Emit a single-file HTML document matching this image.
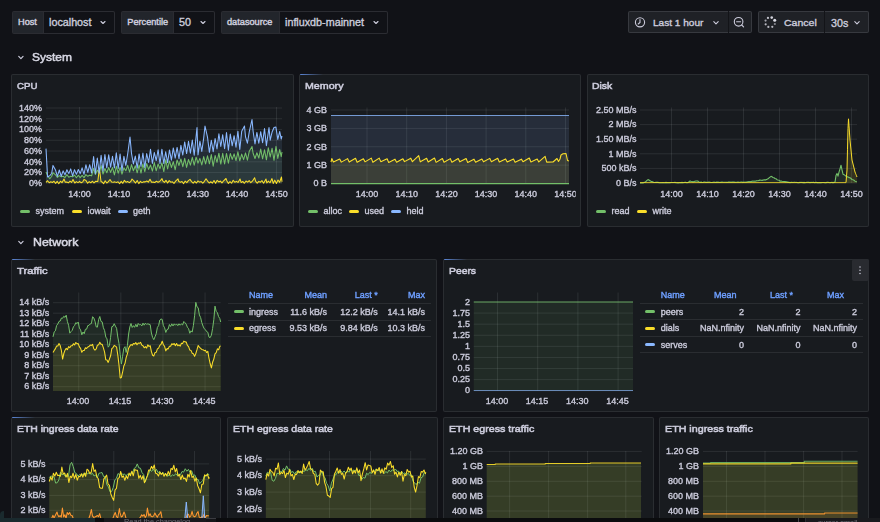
<!DOCTYPE html>
<html><head><meta charset="utf-8"><style>
html,body{margin:0;padding:0;width:880px;height:522px;overflow:hidden;background:#111217;font-family:"Liberation Sans", sans-serif;}
.t{position:absolute;white-space:nowrap;-webkit-text-stroke-width:0.35px;}
.b{position:absolute;}
svg{position:absolute;left:0;top:0;}
</style></head><body>
<div class="b" style="left:12px;top:11px;width:102.5px;height:22.5px;background:#111217;box-sizing:border-box;border:1px solid rgba(204,204,220,0.14);border-radius:2px;"></div><div class="b" style="left:13px;top:12px;width:29.5px;height:20.5px;background:#22252b;"></div><div class="b" style="left:42.5px;top:12px;width:1.0px;height:20.5px;background:rgba(204,204,220,0.14);"></div><div class="b" style="left:121.25px;top:11px;width:93.25px;height:22.5px;background:#111217;box-sizing:border-box;border:1px solid rgba(204,204,220,0.14);border-radius:2px;"></div><div class="b" style="left:122.25px;top:12px;width:51.0px;height:20.5px;background:#22252b;"></div><div class="b" style="left:173.25px;top:12px;width:1.0px;height:20.5px;background:rgba(204,204,220,0.14);"></div><div class="b" style="left:221px;top:11px;width:166.5px;height:22.5px;background:#111217;box-sizing:border-box;border:1px solid rgba(204,204,220,0.14);border-radius:2px;"></div><div class="b" style="left:222px;top:12px;width:57px;height:20.5px;background:#22252b;"></div><div class="b" style="left:279px;top:12px;width:1px;height:20.5px;background:rgba(204,204,220,0.14);"></div><div class="b" style="left:627.6px;top:11px;width:124.39999999999998px;height:22.4px;background:#1f2126;box-sizing:border-box;border:1px solid rgba(204,204,220,0.14);border-radius:2px;"></div><div class="b" style="left:727.5px;top:11px;width:1.0px;height:22.4px;background:#131418;"></div><div class="b" style="left:758px;top:11px;width:111px;height:22.200000000000003px;background:#1f2126;box-sizing:border-box;border:1px solid rgba(204,204,220,0.14);border-radius:2px;"></div><div class="b" style="left:824.2px;top:11px;width:1.0px;height:22.200000000000003px;background:#131418;"></div><div class="b" style="left:11px;top:74px;width:282.5px;height:153px;background:#181b1f;box-sizing:border-box;border:1px solid rgba(204,204,220,0.10);border-radius:2px;"></div><div class="b" style="left:299px;top:74px;width:282px;height:153px;background:#181b1f;box-sizing:border-box;border:1px solid rgba(204,204,220,0.10);border-radius:2px;"></div><div class="b" style="left:300px;top:74.2px;width:23px;height:1.2000000000000028px;background:linear-gradient(90deg,#5b86d8,rgba(91,134,216,0));border-top-left-radius:2px;"></div><div class="b" style="left:586.5px;top:74px;width:282.5px;height:153px;background:#181b1f;box-sizing:border-box;border:1px solid rgba(204,204,220,0.10);border-radius:2px;"></div><div class="b" style="left:20px;top:209.9px;width:10px;height:3.0px;background:#73bf69;border-radius:1.5px;"></div><div class="b" style="left:72px;top:209.9px;width:10px;height:3.0px;background:#fade2a;border-radius:1.5px;"></div><div class="b" style="left:117.5px;top:209.9px;width:10.0px;height:3.0px;background:#8ab8ff;border-radius:1.5px;"></div><div class="b" style="left:308px;top:209.9px;width:10px;height:3.0px;background:#73bf69;border-radius:1.5px;"></div><div class="b" style="left:349px;top:209.9px;width:10px;height:3.0px;background:#fade2a;border-radius:1.5px;"></div><div class="b" style="left:391px;top:209.9px;width:10px;height:3.0px;background:#8ab8ff;border-radius:1.5px;"></div><div class="b" style="left:596px;top:209.9px;width:10px;height:3.0px;background:#73bf69;border-radius:1.5px;"></div><div class="b" style="left:637px;top:209.9px;width:10px;height:3.0px;background:#fade2a;border-radius:1.5px;"></div><div class="b" style="left:11px;top:259px;width:426px;height:153px;background:#181b1f;box-sizing:border-box;border:1px solid rgba(204,204,220,0.10);border-radius:2px;"></div><div class="b" style="left:12px;top:259.2px;width:23px;height:1.1999999999999886px;background:linear-gradient(90deg,#5b86d8,rgba(91,134,216,0));border-top-left-radius:2px;"></div><div class="b" style="left:443px;top:259px;width:426px;height:153px;background:#181b1f;box-sizing:border-box;border:1px solid rgba(204,204,220,0.10);border-radius:2px;"></div><div class="b" style="left:444px;top:259.2px;width:23px;height:1.1999999999999886px;background:linear-gradient(90deg,#5b86d8,rgba(91,134,216,0));border-top-left-radius:2px;"></div><div class="b" style="left:228px;top:303.0px;width:202.7px;height:1.0px;background:rgba(204,204,220,0.10);"></div><div class="b" style="left:228px;top:319.5px;width:202.7px;height:1.0px;background:rgba(204,204,220,0.10);"></div><div class="b" style="left:228px;top:336.0px;width:202.7px;height:1.0px;background:rgba(204,204,220,0.10);"></div><div class="b" style="left:233.5px;top:310.0px;width:10.0px;height:3.0px;background:#73bf69;border-radius:1.5px;"></div><div class="b" style="left:233.5px;top:326.5px;width:10.0px;height:3.0px;background:#fade2a;border-radius:1.5px;"></div><div class="b" style="left:640px;top:302.5px;width:222.5px;height:1.0px;background:rgba(204,204,220,0.10);"></div><div class="b" style="left:640px;top:319.0px;width:222.5px;height:1.0px;background:rgba(204,204,220,0.10);"></div><div class="b" style="left:640px;top:335.5px;width:222.5px;height:1.0px;background:rgba(204,204,220,0.10);"></div><div class="b" style="left:640px;top:352.0px;width:222.5px;height:1.0px;background:rgba(204,204,220,0.10);"></div><div class="b" style="left:645.2px;top:310.0px;width:10.0px;height:3.0px;background:#73bf69;border-radius:1.5px;"></div><div class="b" style="left:645.2px;top:326.5px;width:10.0px;height:3.0px;background:#fade2a;border-radius:1.5px;"></div><div class="b" style="left:645.2px;top:343.0px;width:10.0px;height:3.0px;background:#8ab8ff;border-radius:1.5px;"></div><div class="b" style="left:11px;top:417px;width:210.3px;height:123px;background:#181b1f;box-sizing:border-box;border:1px solid rgba(204,204,220,0.10);border-radius:2px;"></div><div class="b" style="left:12px;top:417.2px;width:23px;height:1.1999999999999886px;background:linear-gradient(90deg,#5b86d8,rgba(91,134,216,0));border-top-left-radius:2px;"></div><div class="b" style="left:227.3px;top:417px;width:210.7px;height:123px;background:#181b1f;box-sizing:border-box;border:1px solid rgba(204,204,220,0.10);border-radius:2px;"></div><div class="b" style="left:443px;top:417px;width:211px;height:123px;background:#181b1f;box-sizing:border-box;border:1px solid rgba(204,204,220,0.10);border-radius:2px;"></div><div class="b" style="left:659px;top:417px;width:210px;height:123px;background:#181b1f;box-sizing:border-box;border:1px solid rgba(204,204,220,0.10);border-radius:2px;"></div>
<svg width="880" height="522" viewBox="0 0 880 522">
<path d="M101.0,21.5 L103.0,23.5 L105.0,21.5" fill="none" stroke="#ccccdc" stroke-width="1.1" stroke-linecap="round" stroke-linejoin="round"/><path d="M201.0,21.5 L203.0,23.5 L205.0,21.5" fill="none" stroke="#ccccdc" stroke-width="1.1" stroke-linecap="round" stroke-linejoin="round"/><path d="M374.0,21.5 L376.0,23.5 L378.0,21.5" fill="none" stroke="#ccccdc" stroke-width="1.1" stroke-linecap="round" stroke-linejoin="round"/><circle cx="640" cy="22.3" r="4.6" fill="none" stroke="#ccccdc" stroke-width="1.1"/><path d="M640,19.6 L640,22.5 L638.2,24" fill="none" stroke="#ccccdc" stroke-width="1.1" stroke-linecap="round"/><path d="M713.8,21.7 L716,23.900000000000002 L718.2,21.7" fill="none" stroke="#ccccdc" stroke-width="1.1" stroke-linecap="round" stroke-linejoin="round"/><circle cx="738.6" cy="21.8" r="4.3" fill="none" stroke="#ccccdc" stroke-width="1.1"/><path d="M736.6,21.8 L740.6,21.8 M741.7,25 L743.6,26.9" fill="none" stroke="#ccccdc" stroke-width="1.1" stroke-linecap="round"/><circle cx="767.95" cy="17.89" r="1.15" fill="#dcdce6" fill-opacity="0.85"/><circle cx="771.73" cy="17.59" r="1.3" fill="#dcdce6" fill-opacity="0.95"/><circle cx="774.69" cy="20.21" r="1.5" fill="#dcdce6" fill-opacity="1"/><circle cx="774.85" cy="23.99" r="1.1" fill="#dcdce6" fill-opacity="0.55"/><circle cx="772.29" cy="26.79" r="1.1" fill="#dcdce6" fill-opacity="0.8"/><circle cx="768.35" cy="26.89" r="1.1" fill="#dcdce6" fill-opacity="0.8"/><circle cx="765.68" cy="24.31" r="1.1" fill="#dcdce6" fill-opacity="0.8"/><circle cx="765.55" cy="20.61" r="1.1" fill="#dcdce6" fill-opacity="0.7"/><path d="M854.8,21.7 L857,23.900000000000002 L859.2,21.7" fill="none" stroke="#ccccdc" stroke-width="1.1" stroke-linecap="round" stroke-linejoin="round"/><path d="M18.75,56.425 L20.9,58.575 L23.049999999999997,56.425" fill="none" stroke="#ccccdc" stroke-width="1.2" stroke-linecap="round" stroke-linejoin="round"/><path d="M18.75,241.425 L20.9,243.575 L23.049999999999997,241.425" fill="none" stroke="#ccccdc" stroke-width="1.2" stroke-linecap="round" stroke-linejoin="round"/><line x1="46" y1="108.0" x2="282" y2="108.0" stroke="rgba(240,250,255,0.09)" stroke-width="1"/><line x1="46" y1="118.76" x2="282" y2="118.76" stroke="rgba(240,250,255,0.09)" stroke-width="1"/><line x1="46" y1="129.52" x2="282" y2="129.52" stroke="rgba(240,250,255,0.09)" stroke-width="1"/><line x1="46" y1="140.28" x2="282" y2="140.28" stroke="rgba(240,250,255,0.09)" stroke-width="1"/><line x1="46" y1="151.04" x2="282" y2="151.04" stroke="rgba(240,250,255,0.09)" stroke-width="1"/><line x1="46" y1="161.8" x2="282" y2="161.8" stroke="rgba(240,250,255,0.09)" stroke-width="1"/><line x1="46" y1="172.56" x2="282" y2="172.56" stroke="rgba(240,250,255,0.09)" stroke-width="1"/><line x1="46" y1="183.32" x2="282" y2="183.32" stroke="rgba(240,250,255,0.09)" stroke-width="1"/><line x1="79.5" y1="107" x2="79.5" y2="183" stroke="rgba(240,250,255,0.09)" stroke-width="1"/><line x1="118.9" y1="107" x2="118.9" y2="183" stroke="rgba(240,250,255,0.09)" stroke-width="1"/><line x1="158.3" y1="107" x2="158.3" y2="183" stroke="rgba(240,250,255,0.09)" stroke-width="1"/><line x1="197.7" y1="107" x2="197.7" y2="183" stroke="rgba(240,250,255,0.09)" stroke-width="1"/><line x1="237.1" y1="107" x2="237.1" y2="183" stroke="rgba(240,250,255,0.09)" stroke-width="1"/><line x1="276.5" y1="107" x2="276.5" y2="183" stroke="rgba(240,250,255,0.09)" stroke-width="1"/><path d="M46,183 L46,172 L47.9,176.14 L49.8,178.72 L51.7,176.3 L53,172.7 L55.5,174.8 L57.4,177.48 L59.3,175.65 L61.2,176.85 L63.1,176.26 L65.0,177.59 L66.9,174.61 L68.8,177.31 L70.7,176.34 L72.6,176.86 L74.5,175.03 L76.4,177.78 L78.3,175.24 L80.2,177.58 L82.1,175.29 L84.0,177.62 L85.9,174.65 L87.8,176.3 L89.7,175.15 L91.6,175.85 L93.6,168.3 L95.4,174.56 L97.3,170.18 L99.2,172.59 L101.1,165.52 L103.0,174.06 L104.9,168.49 L106.8,172.75 L108.7,167.47 L110.6,172.39 L112.5,167.48 L114.4,174.96 L116.3,166.29 L118.2,173.15 L120.1,167.47 L122.0,174.12 L123.9,167.8 L125.8,170.72 L127.7,165.36 L129.6,172.03 L131.5,164.53 L133.4,170.74 L135.3,165.74 L137.2,172.8 L139.1,164.97 L141.0,173.06 L142.9,163.94 L144.8,171.63 L146.7,163.63 L148.6,169.38 L150.5,164.99 L152.4,171.11 L154.3,162.52 L156.2,170.8 L158.1,163.96 L160.0,168.71 L161.9,162.85 L163.8,171.55 L165.7,159.71 L167.6,168.96 L169.5,160.96 L171.4,167.47 L173.3,161.7 L175.2,169.77 L177.1,159.95 L179.0,165.46 L180.9,158.97 L182.8,166.69 L184.7,158.3 L186.6,167.41 L188.5,159.45 L190.4,165.09 L192.3,157.32 L194.2,165.23 L196.1,157.17 L198.0,163.15 L199.9,158.4 L201.8,164.89 L203.7,156.52 L205.6,163.87 L207.5,155.76 L209.4,163.77 L211.3,154.61 L213.2,166.19 L215.1,155.47 L217.0,162.29 L218.9,153.2 L220.8,164.04 L222.7,153.29 L224.6,163.93 L226.5,153.44 L228.4,163.15 L230.3,153.5 L232.2,159.45 L234.1,153.85 L236.0,160.57 L237.9,151.86 L239.8,160.8 L241.7,154.11 L243.6,159.64 L245.5,152.89 L247.4,160.13 L249.3,151.15 L252,146.4 L253.1,153.26 L255.0,158.47 L256.9,152.77 L258.8,158.05 L260.7,149.06 L262.6,158.8 L264.5,149.75 L266.4,159.8 L268.3,147.77 L270.2,156.9 L272.1,148.22 L274.0,160.33 L276,146.4 L277.8,158.46 L279.7,149.63 L281.2,156.6 L282,152.0 L282,183 Z" fill="#73bf69" fill-opacity="0.1" stroke="none"/><path d="M46,183 L46,182.33 L47.6,180.71 L49.2,182.8 L50.8,181.79 L52.4,182.49 L54.0,181.19 L55.6,183.35 L57.2,181.33 L58.8,183.68 L60.4,181.19 L62.0,182.71 L64,179 L65.2,182.12 L66.8,181.99 L68.4,182.79 L70.0,181.08 L71.6,182.37 L73,179.5 L74.8,182.99 L76.4,181.64 L78.0,182.61 L79.6,181.39 L81.2,182.82 L82.8,181.85 L84,179.6 L86.0,180.4 L87.6,183.22 L89.2,181.61 L90.8,182.77 L92.4,181.2 L94.0,182.98 L95.6,181.28 L97.8,181.5 L99.4,168.3 L101,181.5 L102.0,181.96 L103.6,183.72 L105.2,180.72 L106.8,183.04 L108.4,181.64 L110,179.5 L111.6,182.03 L113.2,182.23 L114.8,181.88 L116.4,182.46 L118.0,181.76 L119.6,183.68 L121.2,181.33 L122.8,183.31 L124.4,180.36 L126.0,182.23 L127.6,181.45 L129.2,182.63 L130.8,181.55 L132,179 L134.0,181.09 L135.6,183.06 L137.2,180.44 L138.8,183.62 L140.4,181.29 L142.0,182.63 L143.6,181.74 L145.2,181.87 L146.8,180.98 L148.4,182.1 L150,179.2 L151.6,182.32 L153.2,182.12 L154.8,182.47 L156.4,181.18 L158.0,182.21 L159.6,181.54 L162,178.6 L162.8,180.97 L164.4,182.38 L166.0,180.37 L167.6,183.05 L169.2,180.62 L170.8,182.22 L172.4,181.77 L174.0,183.44 L175.6,181.15 L178,178.8 L178.8,181.48 L180.4,182.29 L182.0,181.5 L183.6,183.58 L185.2,181.14 L186.8,182.6 L188.4,180.56 L190,179.4 L191.6,181.57 L193.2,183.17 L194.8,181.36 L196.4,183.05 L198.0,180.94 L199.6,182.12 L201.2,181.51 L202.8,183.1 L204.4,181.33 L206,178.8 L207.6,181.06 L209.2,183.01 L210.8,181.74 L212.4,183.07 L214.0,180.44 L215.6,183.33 L217.2,180.35 L218.8,181.96 L220.4,181.06 L222.0,182.92 L223.6,180.77 L226,178.5 L226.8,180.67 L228.4,183.44 L230.0,181.57 L231.6,183.24 L233.2,180.27 L234.8,182.25 L236.4,181.34 L238.0,182.43 L240,179 L241.2,182.58 L242.8,181.45 L244.4,183.28 L246.0,180.99 L247.6,182.12 L249.2,180.56 L250.8,182.7 L252.4,181.22 L254.6,177.7 L255.6,181.12 L257.2,183.21 L258.8,181.39 L260.4,182.2 L262.0,180.66 L263.6,183.18 L266,179 L266.8,182.87 L268.4,181.16 L270.0,182.75 L272,178.6 L273.2,183.47 L274.8,180.11 L276.4,183.42 L278.0,180.03 L279.6,182.28 L281.5,177 L282,181.8 L282,183 Z" fill="#fade2a" fill-opacity="0.1" stroke="none"/><path d="M46,183 L46,148.6 L47.6,177 L49.8,175.63 L51.7,173.2 L53,165.4 L55.5,169.98 L57.4,176.34 L59.3,169.98 L61.2,176.26 L63.1,170.87 L65.0,174.83 L66.9,169.71 L68.8,173.61 L70.7,168.9 L72.6,175.81 L74.5,169.67 L76.4,174.33 L78.3,169.44 L80.2,173.59 L82.1,167.87 L84.0,174.32 L85.9,164.75 L87.8,172.31 L89.7,164.68 L91.6,172.93 L93.6,156.6 L95.4,173.74 L97.3,158.05 L99.2,173.1 L101.1,155.23 L103.0,171.16 L104.9,154.46 L106.8,167.81 L108.7,154.78 L110.6,167.12 L112.5,156.32 L114.4,167.99 L116.3,152.83 L118.2,168.45 L120.1,154.13 L122.0,171.05 L123.9,156.28 L125.8,165.35 L127.7,153.71 L130,137 L131.5,153.37 L133.4,163.98 L135.3,156.04 L137.2,168.1 L139.1,153.94 L141.0,166.38 L142.9,153.01 L144.8,167.64 L146.7,153.5 L148.6,162.4 L150.5,149.26 L152.4,163.42 L154.3,152.42 L156.2,160.59 L158.1,149.75 L160.0,163.7 L161.9,149.16 L163.8,163.59 L165.7,151.79 L167.6,162.71 L169.5,149.94 L171.4,160.11 L173.3,147.95 L175.2,158.1 L177.1,147.41 L179.0,158.68 L180.9,145.24 L182.8,155.04 L184.7,141.93 L186.6,153.56 L188.5,141.33 L190.4,153.2 L192.3,139.97 L194.2,155.26 L197,127.5 L198.0,154.85 L199.9,141.2 L201.8,151.39 L203.7,138.05 L205,126 L207.5,137.11 L209.4,152.35 L211.3,140.28 L213.2,151.63 L215.1,138.49 L217.0,148.91 L218.9,133.73 L220.8,146.52 L222.7,134.7 L224.6,148.8 L226.5,132.54 L228.4,150.15 L230.3,134.14 L232.2,145.8 L234.1,135.71 L236.0,147.18 L237.9,131.16 L239.8,149.42 L241.7,131.23 L244.5,126 L245.5,136.76 L247.4,143.18 L249.3,131.58 L252,119.5 L253.1,131.23 L255.0,143.96 L256.9,132.46 L258.8,143.26 L260.7,131.71 L262.6,142.62 L264.5,128.58 L266.4,145.61 L269,127.5 L270.2,140.25 L272.1,131.93 L274,127.5 L275.9,127.07 L277.8,139.37 L279.7,131.45 L281.2,139 L282,136.0 L282,183 Z" fill="#8ab8ff" fill-opacity="0.1" stroke="none"/><path d="M46,172 L47.9,176.14 L49.8,178.72 L51.7,176.3 L53,172.7 L55.5,174.8 L57.4,177.48 L59.3,175.65 L61.2,176.85 L63.1,176.26 L65.0,177.59 L66.9,174.61 L68.8,177.31 L70.7,176.34 L72.6,176.86 L74.5,175.03 L76.4,177.78 L78.3,175.24 L80.2,177.58 L82.1,175.29 L84.0,177.62 L85.9,174.65 L87.8,176.3 L89.7,175.15 L91.6,175.85 L93.6,168.3 L95.4,174.56 L97.3,170.18 L99.2,172.59 L101.1,165.52 L103.0,174.06 L104.9,168.49 L106.8,172.75 L108.7,167.47 L110.6,172.39 L112.5,167.48 L114.4,174.96 L116.3,166.29 L118.2,173.15 L120.1,167.47 L122.0,174.12 L123.9,167.8 L125.8,170.72 L127.7,165.36 L129.6,172.03 L131.5,164.53 L133.4,170.74 L135.3,165.74 L137.2,172.8 L139.1,164.97 L141.0,173.06 L142.9,163.94 L144.8,171.63 L146.7,163.63 L148.6,169.38 L150.5,164.99 L152.4,171.11 L154.3,162.52 L156.2,170.8 L158.1,163.96 L160.0,168.71 L161.9,162.85 L163.8,171.55 L165.7,159.71 L167.6,168.96 L169.5,160.96 L171.4,167.47 L173.3,161.7 L175.2,169.77 L177.1,159.95 L179.0,165.46 L180.9,158.97 L182.8,166.69 L184.7,158.3 L186.6,167.41 L188.5,159.45 L190.4,165.09 L192.3,157.32 L194.2,165.23 L196.1,157.17 L198.0,163.15 L199.9,158.4 L201.8,164.89 L203.7,156.52 L205.6,163.87 L207.5,155.76 L209.4,163.77 L211.3,154.61 L213.2,166.19 L215.1,155.47 L217.0,162.29 L218.9,153.2 L220.8,164.04 L222.7,153.29 L224.6,163.93 L226.5,153.44 L228.4,163.15 L230.3,153.5 L232.2,159.45 L234.1,153.85 L236.0,160.57 L237.9,151.86 L239.8,160.8 L241.7,154.11 L243.6,159.64 L245.5,152.89 L247.4,160.13 L249.3,151.15 L252,146.4 L253.1,153.26 L255.0,158.47 L256.9,152.77 L258.8,158.05 L260.7,149.06 L262.6,158.8 L264.5,149.75 L266.4,159.8 L268.3,147.77 L270.2,156.9 L272.1,148.22 L274.0,160.33 L276,146.4 L277.8,158.46 L279.7,149.63 L281.2,156.6 L282,152.0" fill="none" stroke="#73bf69" stroke-width="1.05" stroke-linejoin="round" stroke-opacity="1"/><path d="M46,182.33 L47.6,180.71 L49.2,182.8 L50.8,181.79 L52.4,182.49 L54.0,181.19 L55.6,183.35 L57.2,181.33 L58.8,183.68 L60.4,181.19 L62.0,182.71 L64,179 L65.2,182.12 L66.8,181.99 L68.4,182.79 L70.0,181.08 L71.6,182.37 L73,179.5 L74.8,182.99 L76.4,181.64 L78.0,182.61 L79.6,181.39 L81.2,182.82 L82.8,181.85 L84,179.6 L86.0,180.4 L87.6,183.22 L89.2,181.61 L90.8,182.77 L92.4,181.2 L94.0,182.98 L95.6,181.28 L97.8,181.5 L99.4,168.3 L101,181.5 L102.0,181.96 L103.6,183.72 L105.2,180.72 L106.8,183.04 L108.4,181.64 L110,179.5 L111.6,182.03 L113.2,182.23 L114.8,181.88 L116.4,182.46 L118.0,181.76 L119.6,183.68 L121.2,181.33 L122.8,183.31 L124.4,180.36 L126.0,182.23 L127.6,181.45 L129.2,182.63 L130.8,181.55 L132,179 L134.0,181.09 L135.6,183.06 L137.2,180.44 L138.8,183.62 L140.4,181.29 L142.0,182.63 L143.6,181.74 L145.2,181.87 L146.8,180.98 L148.4,182.1 L150,179.2 L151.6,182.32 L153.2,182.12 L154.8,182.47 L156.4,181.18 L158.0,182.21 L159.6,181.54 L162,178.6 L162.8,180.97 L164.4,182.38 L166.0,180.37 L167.6,183.05 L169.2,180.62 L170.8,182.22 L172.4,181.77 L174.0,183.44 L175.6,181.15 L178,178.8 L178.8,181.48 L180.4,182.29 L182.0,181.5 L183.6,183.58 L185.2,181.14 L186.8,182.6 L188.4,180.56 L190,179.4 L191.6,181.57 L193.2,183.17 L194.8,181.36 L196.4,183.05 L198.0,180.94 L199.6,182.12 L201.2,181.51 L202.8,183.1 L204.4,181.33 L206,178.8 L207.6,181.06 L209.2,183.01 L210.8,181.74 L212.4,183.07 L214.0,180.44 L215.6,183.33 L217.2,180.35 L218.8,181.96 L220.4,181.06 L222.0,182.92 L223.6,180.77 L226,178.5 L226.8,180.67 L228.4,183.44 L230.0,181.57 L231.6,183.24 L233.2,180.27 L234.8,182.25 L236.4,181.34 L238.0,182.43 L240,179 L241.2,182.58 L242.8,181.45 L244.4,183.28 L246.0,180.99 L247.6,182.12 L249.2,180.56 L250.8,182.7 L252.4,181.22 L254.6,177.7 L255.6,181.12 L257.2,183.21 L258.8,181.39 L260.4,182.2 L262.0,180.66 L263.6,183.18 L266,179 L266.8,182.87 L268.4,181.16 L270.0,182.75 L272,178.6 L273.2,183.47 L274.8,180.11 L276.4,183.42 L278.0,180.03 L279.6,182.28 L281.5,177 L282,181.8" fill="none" stroke="#fade2a" stroke-width="1.05" stroke-linejoin="round" stroke-opacity="1"/><path d="M46,148.6 L47.6,177 L49.8,175.63 L51.7,173.2 L53,165.4 L55.5,169.98 L57.4,176.34 L59.3,169.98 L61.2,176.26 L63.1,170.87 L65.0,174.83 L66.9,169.71 L68.8,173.61 L70.7,168.9 L72.6,175.81 L74.5,169.67 L76.4,174.33 L78.3,169.44 L80.2,173.59 L82.1,167.87 L84.0,174.32 L85.9,164.75 L87.8,172.31 L89.7,164.68 L91.6,172.93 L93.6,156.6 L95.4,173.74 L97.3,158.05 L99.2,173.1 L101.1,155.23 L103.0,171.16 L104.9,154.46 L106.8,167.81 L108.7,154.78 L110.6,167.12 L112.5,156.32 L114.4,167.99 L116.3,152.83 L118.2,168.45 L120.1,154.13 L122.0,171.05 L123.9,156.28 L125.8,165.35 L127.7,153.71 L130,137 L131.5,153.37 L133.4,163.98 L135.3,156.04 L137.2,168.1 L139.1,153.94 L141.0,166.38 L142.9,153.01 L144.8,167.64 L146.7,153.5 L148.6,162.4 L150.5,149.26 L152.4,163.42 L154.3,152.42 L156.2,160.59 L158.1,149.75 L160.0,163.7 L161.9,149.16 L163.8,163.59 L165.7,151.79 L167.6,162.71 L169.5,149.94 L171.4,160.11 L173.3,147.95 L175.2,158.1 L177.1,147.41 L179.0,158.68 L180.9,145.24 L182.8,155.04 L184.7,141.93 L186.6,153.56 L188.5,141.33 L190.4,153.2 L192.3,139.97 L194.2,155.26 L197,127.5 L198.0,154.85 L199.9,141.2 L201.8,151.39 L203.7,138.05 L205,126 L207.5,137.11 L209.4,152.35 L211.3,140.28 L213.2,151.63 L215.1,138.49 L217.0,148.91 L218.9,133.73 L220.8,146.52 L222.7,134.7 L224.6,148.8 L226.5,132.54 L228.4,150.15 L230.3,134.14 L232.2,145.8 L234.1,135.71 L236.0,147.18 L237.9,131.16 L239.8,149.42 L241.7,131.23 L244.5,126 L245.5,136.76 L247.4,143.18 L249.3,131.58 L252,119.5 L253.1,131.23 L255.0,143.96 L256.9,132.46 L258.8,143.26 L260.7,131.71 L262.6,142.62 L264.5,128.58 L266.4,145.61 L269,127.5 L270.2,140.25 L272.1,131.93 L274,127.5 L275.9,127.07 L277.8,139.37 L279.7,131.45 L281.2,139 L282,136.0" fill="none" stroke="#8ab8ff" stroke-width="1.05" stroke-linejoin="round" stroke-opacity="1"/><line x1="331" y1="110.0" x2="569" y2="110.0" stroke="rgba(240,250,255,0.09)" stroke-width="1"/><line x1="331" y1="128.375" x2="569" y2="128.375" stroke="rgba(240,250,255,0.09)" stroke-width="1"/><line x1="331" y1="146.75" x2="569" y2="146.75" stroke="rgba(240,250,255,0.09)" stroke-width="1"/><line x1="331" y1="165.125" x2="569" y2="165.125" stroke="rgba(240,250,255,0.09)" stroke-width="1"/><line x1="331" y1="183.5" x2="569" y2="183.5" stroke="rgba(240,250,255,0.09)" stroke-width="1"/><line x1="367.0" y1="107.5" x2="367.0" y2="183.5" stroke="rgba(240,250,255,0.09)" stroke-width="1"/><line x1="406.7" y1="107.5" x2="406.7" y2="183.5" stroke="rgba(240,250,255,0.09)" stroke-width="1"/><line x1="446.4" y1="107.5" x2="446.4" y2="183.5" stroke="rgba(240,250,255,0.09)" stroke-width="1"/><line x1="486.1" y1="107.5" x2="486.1" y2="183.5" stroke="rgba(240,250,255,0.09)" stroke-width="1"/><line x1="525.8" y1="107.5" x2="525.8" y2="183.5" stroke="rgba(240,250,255,0.09)" stroke-width="1"/><line x1="565.5" y1="107.5" x2="565.5" y2="183.5" stroke="rgba(240,250,255,0.09)" stroke-width="1"/><path d="M331,183.5 L331,115.5 L341,115.5 L351,115.5 L361,115.5 L371,115.5 L381,115.5 L391,115.5 L401,115.5 L411,115.5 L421,115.5 L431,115.5 L441,115.5 L451,115.5 L461,115.5 L471,115.5 L481,115.5 L491,115.5 L501,115.5 L511,115.5 L521,115.5 L531,115.5 L541,115.5 L551,115.5 L561,115.5 L569,115.5 L569,183.5 Z" fill="#8ab8ff" fill-opacity="0.12" stroke="none"/><path d="M331,183.5 L331,162.10379514747245 L331.8,158.54285546421178 L333.4,162.0190850630898 L339.7,159.10905270082847 L341.29999999999995,162.1286463459649 L347.59999999999997,158.60940952767473 L349.19999999999993,162.06071777513762 L355.49999999999994,158.22159241262585 L357.0999999999999,162.31367918526794 L363.3999999999999,158.75585926426015 L364.9999999999999,161.87306113636208 L371.2999999999999,158.11294814747507 L372.89999999999986,162.32868008093047 L379.1999999999999,158.10880464499022 L380.79999999999984,161.63769230273286 L387.09999999999985,158.83212617904948 L388.6999999999998,162.468282003013 L394.99999999999983,159.17863210495852 L396.5999999999998,162.1540064341207 L402.8999999999998,158.7847070402406 L404.4999999999998,161.61350066325465 L410.7999999999998,158.18899291416818 L412.39999999999975,161.65359599465197 L418.69999999999976,155.7 L420.2999999999997,161.81774871229868 L426.59999999999974,158.2282499153575 L428.1999999999997,162.01754101510096 L434.4999999999997,158.03609910706973 L436.0999999999997,162.35818441566667 L442.3999999999997,158.528637339988 L443.99999999999966,162.17626253712726 L450.29999999999967,158.6229489377169 L451.89999999999964,162.19620457870133 L458.19999999999965,158.59972778264813 L459.7999999999996,161.8503466096975 L466.0999999999996,158.54879585791946 L467.6999999999996,162.4961224774906 L473.9999999999996,159.1971874405557 L475.59999999999957,162.23702865934814 L481.8999999999996,159.00825865939143 L483.49999999999955,161.80669931144712 L489.79999999999956,158.37833266041866 L491.3999999999995,161.66320114960394 L497.69999999999953,158.34684793677704 L499.2999999999995,161.96035982442663 L505.5999999999995,158.9195454636925 L507.1999999999995,161.94786217853533 L513.4999999999994,159.0159003462574 L515.0999999999995,162.36257879597252 L521.3999999999994,159.14965085998378 L522.9999999999994,161.78874567325664 L529.2999999999994,158.0006539244667 L530.8999999999994,162.0229885484123 L537.1999999999994,159.092326313725 L538.7999999999994,161.95768194927135 L545.0999999999993,156.4 L546.6999999999994,162.16650942101063 L553,162 L557,158.5 L558.5,161.5 L560,159 L561,155 L563,153.8 L566,153.5 L567.5,160.5 L569,161 L569,183.5 Z" fill="#fade2a" fill-opacity="0.1" stroke="none"/><path d="M331,183.5 L331,183.6 L569,183.6 L569,183.5 Z" fill="#73bf69" fill-opacity="0.1" stroke="none"/><path d="M331,183.6 L569,183.6" fill="none" stroke="#73bf69" stroke-width="1.2" stroke-linejoin="round" stroke-opacity="1"/><path d="M331,162.10379514747245 L331.8,158.54285546421178 L333.4,162.0190850630898 L339.7,159.10905270082847 L341.29999999999995,162.1286463459649 L347.59999999999997,158.60940952767473 L349.19999999999993,162.06071777513762 L355.49999999999994,158.22159241262585 L357.0999999999999,162.31367918526794 L363.3999999999999,158.75585926426015 L364.9999999999999,161.87306113636208 L371.2999999999999,158.11294814747507 L372.89999999999986,162.32868008093047 L379.1999999999999,158.10880464499022 L380.79999999999984,161.63769230273286 L387.09999999999985,158.83212617904948 L388.6999999999998,162.468282003013 L394.99999999999983,159.17863210495852 L396.5999999999998,162.1540064341207 L402.8999999999998,158.7847070402406 L404.4999999999998,161.61350066325465 L410.7999999999998,158.18899291416818 L412.39999999999975,161.65359599465197 L418.69999999999976,155.7 L420.2999999999997,161.81774871229868 L426.59999999999974,158.2282499153575 L428.1999999999997,162.01754101510096 L434.4999999999997,158.03609910706973 L436.0999999999997,162.35818441566667 L442.3999999999997,158.528637339988 L443.99999999999966,162.17626253712726 L450.29999999999967,158.6229489377169 L451.89999999999964,162.19620457870133 L458.19999999999965,158.59972778264813 L459.7999999999996,161.8503466096975 L466.0999999999996,158.54879585791946 L467.6999999999996,162.4961224774906 L473.9999999999996,159.1971874405557 L475.59999999999957,162.23702865934814 L481.8999999999996,159.00825865939143 L483.49999999999955,161.80669931144712 L489.79999999999956,158.37833266041866 L491.3999999999995,161.66320114960394 L497.69999999999953,158.34684793677704 L499.2999999999995,161.96035982442663 L505.5999999999995,158.9195454636925 L507.1999999999995,161.94786217853533 L513.4999999999994,159.0159003462574 L515.0999999999995,162.36257879597252 L521.3999999999994,159.14965085998378 L522.9999999999994,161.78874567325664 L529.2999999999994,158.0006539244667 L530.8999999999994,162.0229885484123 L537.1999999999994,159.092326313725 L538.7999999999994,161.95768194927135 L545.0999999999993,156.4 L546.6999999999994,162.16650942101063 L553,162 L557,158.5 L558.5,161.5 L560,159 L561,155 L563,153.8 L566,153.5 L567.5,160.5 L569,161" fill="none" stroke="#fade2a" stroke-width="1.1" stroke-linejoin="round" stroke-opacity="1"/><path d="M331,115.5 L341,115.5 L351,115.5 L361,115.5 L371,115.5 L381,115.5 L391,115.5 L401,115.5 L411,115.5 L421,115.5 L431,115.5 L441,115.5 L451,115.5 L461,115.5 L471,115.5 L481,115.5 L491,115.5 L501,115.5 L511,115.5 L521,115.5 L531,115.5 L541,115.5 L551,115.5 L561,115.5 L569,115.5" fill="none" stroke="#8ab8ff" stroke-width="1.1" stroke-linejoin="round" stroke-opacity="0.8"/><line x1="640" y1="110.0" x2="857" y2="110.0" stroke="rgba(240,250,255,0.09)" stroke-width="1"/><line x1="640" y1="124.6" x2="857" y2="124.6" stroke="rgba(240,250,255,0.09)" stroke-width="1"/><line x1="640" y1="139.2" x2="857" y2="139.2" stroke="rgba(240,250,255,0.09)" stroke-width="1"/><line x1="640" y1="153.8" x2="857" y2="153.8" stroke="rgba(240,250,255,0.09)" stroke-width="1"/><line x1="640" y1="168.4" x2="857" y2="168.4" stroke="rgba(240,250,255,0.09)" stroke-width="1"/><line x1="640" y1="183.0" x2="857" y2="183.0" stroke="rgba(240,250,255,0.09)" stroke-width="1"/><line x1="671.5" y1="107.5" x2="671.5" y2="183" stroke="rgba(240,250,255,0.09)" stroke-width="1"/><line x1="707.5" y1="107.5" x2="707.5" y2="183" stroke="rgba(240,250,255,0.09)" stroke-width="1"/><line x1="743.5" y1="107.5" x2="743.5" y2="183" stroke="rgba(240,250,255,0.09)" stroke-width="1"/><line x1="779.5" y1="107.5" x2="779.5" y2="183" stroke="rgba(240,250,255,0.09)" stroke-width="1"/><line x1="815.5" y1="107.5" x2="815.5" y2="183" stroke="rgba(240,250,255,0.09)" stroke-width="1"/><line x1="851.5" y1="107.5" x2="851.5" y2="183" stroke="rgba(240,250,255,0.09)" stroke-width="1"/><path d="M640,183 L640,182.86 L641,183.01 L642,182.91 L643,182.91 L644,182.41 L645,182.34 L646,181.29 L647,180.34 L648,179.64 L649,179.94 L650,180.85 L651,181.33 L652,181.63 L653,181.96 L654,182.45 L655,182.57 L656,182.21 L657,182.37 L658,182.3 L659,182.73 L660,182.7 L661,182.7 L662,182.72 L663,182.67 L664,182.8 L665,182.71 L666,182.39 L667,182.75 L668,182.53 L669,182.7 L670,182.58 L671,182.51 L672,182.47 L673,182.51 L674,182.45 L675,182.33 L676,182.76 L677,182.75 L678,182.86 L679,182.69 L680,182.61 L681,182.73 L682,182.36 L683,182.69 L684,182.55 L685,182.4 L686,182.42 L687,182.61 L688,182.45 L689,181.78 L690,181.06 L691,181.27 L692,181.45 L693,181.99 L694,181.59 L695,181.34 L696,181.07 L697,180.92 L698,181.14 L699,181.89 L700,182.47 L701,182.14 L702,182.34 L703,182.47 L704,181.93 L705,182.0 L706,182.4 L707,182.42 L708,182.3 L709,182.02 L710,182.17 L711,182.45 L712,182.46 L713,182.41 L714,182.05 L715,182.45 L716,182.16 L717,182.37 L718,182.02 L719,182.53 L720,182.31 L721,182.38 L722,182.08 L723,182.32 L724,182.3 L725,182.31 L726,182.17 L727,182.4 L728,182.17 L729,182.14 L730,182.07 L731,182.38 L732,182.04 L733,182.11 L734,182.02 L735,182.36 L736,182.31 L737,182.31 L738,182.01 L739,182.25 L740,182.19 L741,182.05 L742,182.0 L743,182.59 L744,182.07 L745,182.18 L746,182.03 L747,182.1 L748,181.66 L749,181.77 L750,181.58 L751,181.74 L752,181.11 L753,181.18 L754,181.15 L755,181.31 L756,180.91 L757,180.76 L758,180.75 L759,180.4 L760,180.11 L761,180.26 L762,180.38 L763,180.15 L764,179.74 L765,179.86 L766,179.84 L767,179.36 L768,178.8 L769,177.91 L770,177.1 L771,176.37 L772,176.82 L773,177.41 L774,177.72 L775,178.44 L776,178.75 L777,179.65 L778,180.06 L779,180.2 L780,181.16 L781,180.96 L782,181.29 L783,181.48 L784,181.5 L785,181.62 L786,181.86 L787,181.83 L788,182.42 L789,182.12 L790,182.69 L791,182.33 L792,182.38 L793,182.43 L794,182.22 L795,182.28 L796,182.42 L797,182.47 L798,182.73 L799,182.79 L800,182.23 L801,182.52 L802,182.28 L803,182.68 L804,182.39 L805,182.74 L806,182.53 L807,182.28 L808,182.2 L809,182.35 L810,182.72 L811,182.29 L812,182.49 L813,182.42 L814,182.41 L815,182.68 L816,182.33 L817,182.63 L818,182.6 L819,182.76 L820,182.51 L821,182.75 L822,182.46 L823,182.54 L824,182.57 L825,182.7 L826,182.74 L827,182.27 L828,182.28 L829,182.52 L830,182.69 L831,182.52 L832,182.38 L833,182.78 L834,182.38 L835,182.25 L836,175.56 L837,173.38 L838,176.14 L839,172.1 L840,168.8 L841,165.22 L842,169.8 L843,174.19 L844,174.62 L845,175.41 L846,176.2 L847,176.63 L848,176.87 L849,177.66 L850,177.77 L851,178.49 L852,179.5 L853,179.78 L854,180.26 L855,181.17 L856,181.47 L857,181.7 L857,183 Z" fill="#73bf69" fill-opacity="0.1" stroke="none"/><path d="M640,183 L640,182.6 L640.5,182.6 L641.0,182.6 L641.5,182.6 L642.0,182.6 L642.5,182.6 L643.0,182.6 L643.5,182.6 L644.0,182.6 L644.5,182.6 L645.0,182.6 L645.5,182.6 L646.0,182.6 L646.5,182.6 L647.0,182.6 L647.5,182.6 L648.0,182.6 L648.5,182.6 L649.0,182.6 L649.5,182.6 L650.0,182.6 L650.5,182.6 L651.0,182.6 L651.5,182.6 L652.0,182.6 L652.5,182.6 L653.0,182.6 L653.5,182.6 L654.0,182.6 L654.5,182.6 L655.0,182.6 L655.5,182.6 L656.0,182.6 L656.5,182.6 L657.0,182.6 L657.5,182.6 L658.0,182.6 L658.5,182.6 L659.0,182.6 L659.5,182.6 L660.0,182.6 L660.5,182.6 L661.0,182.6 L661.5,182.6 L662.0,182.6 L662.5,182.6 L663.0,182.6 L663.5,182.6 L664.0,182.6 L664.5,182.6 L665.0,182.6 L665.5,182.6 L666.0,182.6 L666.5,182.6 L667.0,182.6 L667.5,182.6 L668.0,182.6 L668.5,182.6 L669.0,182.6 L669.5,182.6 L670.0,182.6 L670.5,182.6 L671.0,182.6 L671.5,182.6 L672.0,182.6 L672.5,182.6 L673.0,182.6 L673.5,182.6 L674.0,182.6 L674.5,182.6 L675.0,182.6 L675.5,182.6 L676.0,182.6 L676.5,182.6 L677.0,182.6 L677.5,182.6 L678.0,182.6 L678.5,182.6 L679.0,182.6 L679.5,182.6 L680.0,182.6 L680.5,182.6 L681.0,182.6 L681.5,182.6 L682.0,182.6 L682.5,182.6 L683.0,182.6 L683.5,182.6 L684.0,182.6 L684.5,182.6 L685.0,182.6 L685.5,182.6 L686.0,182.6 L686.5,182.6 L687.0,182.6 L687.5,182.6 L688.0,182.6 L688.5,182.6 L689.0,182.6 L689.5,182.6 L690.0,182.6 L690.5,182.6 L691.0,182.6 L691.5,182.6 L692.0,182.6 L692.5,182.6 L693.0,182.6 L693.5,182.6 L694.0,182.6 L694.5,182.6 L695.0,182.6 L695.5,182.6 L696.0,182.6 L696.5,182.6 L697.0,182.6 L697.5,182.6 L698.0,182.6 L698.5,182.6 L699.0,182.6 L699.5,182.6 L700.0,182.6 L700.5,182.6 L701.0,182.6 L701.5,182.6 L702.0,182.6 L702.5,182.6 L703.0,182.6 L703.5,182.6 L704.0,182.6 L704.5,182.6 L705.0,182.6 L705.5,182.6 L706.0,182.6 L706.5,182.6 L707.0,182.6 L707.5,182.6 L708.0,182.6 L708.5,182.6 L709.0,182.6 L709.5,182.6 L710.0,182.6 L710.5,182.6 L711.0,182.6 L711.5,182.6 L712.0,182.6 L712.5,182.6 L713.0,182.6 L713.5,182.6 L714.0,182.6 L714.5,182.6 L715.0,182.6 L715.5,182.6 L716.0,182.6 L716.5,182.6 L717.0,182.6 L717.5,182.6 L718.0,182.6 L718.5,182.6 L719.0,182.6 L719.5,182.6 L720.0,182.6 L720.5,182.6 L721.0,182.6 L721.5,182.6 L722.0,182.6 L722.5,182.6 L723.0,182.6 L723.5,182.6 L724.0,182.6 L724.5,182.6 L725.0,182.6 L725.5,182.6 L726.0,182.6 L726.5,182.6 L727.0,182.6 L727.5,182.6 L728.0,182.6 L728.5,182.6 L729.0,182.6 L729.5,182.6 L730.0,182.6 L730.5,182.6 L731.0,182.6 L731.5,182.6 L732.0,182.6 L732.5,182.6 L733.0,182.6 L733.5,182.6 L734.0,182.6 L734.5,182.6 L735.0,182.6 L735.5,182.6 L736.0,182.6 L736.5,182.6 L737.0,182.6 L737.5,182.6 L738.0,182.6 L738.5,182.6 L739.0,182.6 L739.5,182.6 L740.0,182.6 L740.5,182.6 L741.0,182.6 L741.5,182.6 L742.0,182.6 L742.5,182.6 L743.0,182.6 L743.5,182.6 L744.0,182.6 L744.5,182.6 L745.0,182.6 L745.5,182.6 L746.0,182.6 L746.5,182.6 L747.0,182.6 L747.5,182.6 L748.0,182.6 L748.5,182.6 L749.0,182.6 L749.5,182.6 L750.0,182.6 L750.5,182.6 L751.0,182.6 L751.5,182.6 L752.0,182.6 L752.5,182.6 L753.0,182.6 L753.5,182.6 L754.0,182.6 L754.5,182.6 L755.0,182.6 L755.5,182.6 L756.0,182.6 L756.5,182.6 L757.0,182.6 L757.5,182.6 L758.0,182.6 L758.5,182.6 L759.0,182.6 L759.5,182.6 L760.0,182.6 L760.5,182.6 L761.0,182.6 L761.5,182.6 L762.0,182.6 L762.5,182.6 L763.0,182.6 L763.5,182.6 L764.0,182.6 L764.5,182.6 L765.0,182.6 L765.5,182.6 L766.0,182.6 L766.5,182.6 L767.0,182.6 L767.5,182.6 L768.0,182.6 L768.5,182.6 L769.0,182.6 L769.5,182.6 L770.0,182.6 L770.5,182.6 L771.0,182.6 L771.5,182.6 L772.0,182.6 L772.5,182.6 L773.0,182.6 L773.5,182.6 L774.0,182.6 L774.5,182.6 L775.0,182.6 L775.5,182.6 L776.0,182.6 L776.5,182.6 L777.0,182.6 L777.5,182.6 L778.0,182.6 L778.5,182.6 L779.0,182.6 L779.5,182.6 L780.0,182.6 L780.5,182.6 L781.0,182.6 L781.5,182.6 L782.0,182.6 L782.5,182.6 L783.0,182.6 L783.5,182.6 L784.0,182.6 L784.5,182.6 L785.0,182.6 L785.5,182.6 L786.0,182.6 L786.5,182.6 L787.0,182.6 L787.5,182.6 L788.0,182.6 L788.5,182.6 L789.0,182.6 L789.5,182.6 L790.0,182.6 L790.5,182.6 L791.0,182.6 L791.5,182.6 L792.0,182.6 L792.5,182.6 L793.0,182.6 L793.5,182.6 L794.0,182.6 L794.5,182.6 L795.0,182.6 L795.5,182.6 L796.0,182.6 L796.5,182.6 L797.0,182.6 L797.5,182.6 L798.0,182.6 L798.5,182.6 L799.0,182.6 L799.5,182.6 L800.0,182.6 L800.5,182.6 L801.0,182.6 L801.5,182.6 L802.0,182.6 L802.5,182.6 L803.0,182.6 L803.5,182.6 L804.0,182.6 L804.5,182.6 L805.0,182.6 L805.5,182.6 L806.0,182.6 L806.5,182.6 L807.0,182.6 L807.5,182.6 L808.0,182.6 L808.5,182.6 L809.0,182.6 L809.5,182.6 L810.0,182.6 L810.5,182.6 L811.0,182.6 L811.5,182.6 L812.0,182.6 L812.5,182.6 L813.0,182.6 L813.5,182.6 L814.0,182.6 L814.5,182.6 L815.0,182.6 L815.5,182.6 L816.0,182.6 L816.5,182.6 L817.0,182.6 L817.5,182.6 L818.0,182.6 L818.5,182.6 L819.0,182.6 L819.5,182.6 L820.0,182.6 L820.5,182.6 L821.0,182.6 L821.5,182.6 L822.0,182.6 L822.5,182.6 L823.0,182.6 L823.5,182.6 L824.0,182.6 L824.5,182.6 L825.0,182.6 L825.5,182.6 L826.0,182.6 L826.5,182.6 L827.0,182.6 L827.5,182.6 L828.0,182.6 L828.5,182.6 L829.0,182.6 L829.5,182.6 L830.0,182.6 L830.5,182.6 L831.0,182.6 L831.5,182.6 L832.0,182.6 L832.5,182.6 L833.0,182.6 L833.5,182.6 L834.0,182.6 L834.5,182.6 L835.0,182.6 L835.5,182.6 L836.0,182.6 L836.5,182.6 L837.0,182.6 L837.5,182.6 L838.0,182.6 L838.5,182.6 L839.0,182.6 L839.5,182.6 L840.0,182.6 L840.5,182.6 L841.0,182.6 L841.5,182.6 L842.0,182.6 L842.5,182.6 L843.0,182.6 L843.5,182.6 L844.0,182.6 L844.5,182.6 L845.0,182.6 L845.5,182.6 L846.0,182.6 L846.5,176.3 L847.0,170.0 L847.5,149.23 L848.0,128.46 L848.5,118.82 L849.0,125.88 L849.5,132.94 L850.0,140.0 L850.5,145.0 L851.0,150.0 L851.5,155.0 L852.0,160.0 L852.5,162.0 L853.0,164.0 L853.5,166.0 L854.0,168.0 L854.5,170.0 L855.0,172.0 L855.5,173.25 L856.0,174.5 L856.5,175.75 L857.0,177.0 L857.0,183 Z" fill="#fade2a" fill-opacity="0.12" stroke="none"/><path d="M640,182.86 L641,183.01 L642,182.91 L643,182.91 L644,182.41 L645,182.34 L646,181.29 L647,180.34 L648,179.64 L649,179.94 L650,180.85 L651,181.33 L652,181.63 L653,181.96 L654,182.45 L655,182.57 L656,182.21 L657,182.37 L658,182.3 L659,182.73 L660,182.7 L661,182.7 L662,182.72 L663,182.67 L664,182.8 L665,182.71 L666,182.39 L667,182.75 L668,182.53 L669,182.7 L670,182.58 L671,182.51 L672,182.47 L673,182.51 L674,182.45 L675,182.33 L676,182.76 L677,182.75 L678,182.86 L679,182.69 L680,182.61 L681,182.73 L682,182.36 L683,182.69 L684,182.55 L685,182.4 L686,182.42 L687,182.61 L688,182.45 L689,181.78 L690,181.06 L691,181.27 L692,181.45 L693,181.99 L694,181.59 L695,181.34 L696,181.07 L697,180.92 L698,181.14 L699,181.89 L700,182.47 L701,182.14 L702,182.34 L703,182.47 L704,181.93 L705,182.0 L706,182.4 L707,182.42 L708,182.3 L709,182.02 L710,182.17 L711,182.45 L712,182.46 L713,182.41 L714,182.05 L715,182.45 L716,182.16 L717,182.37 L718,182.02 L719,182.53 L720,182.31 L721,182.38 L722,182.08 L723,182.32 L724,182.3 L725,182.31 L726,182.17 L727,182.4 L728,182.17 L729,182.14 L730,182.07 L731,182.38 L732,182.04 L733,182.11 L734,182.02 L735,182.36 L736,182.31 L737,182.31 L738,182.01 L739,182.25 L740,182.19 L741,182.05 L742,182.0 L743,182.59 L744,182.07 L745,182.18 L746,182.03 L747,182.1 L748,181.66 L749,181.77 L750,181.58 L751,181.74 L752,181.11 L753,181.18 L754,181.15 L755,181.31 L756,180.91 L757,180.76 L758,180.75 L759,180.4 L760,180.11 L761,180.26 L762,180.38 L763,180.15 L764,179.74 L765,179.86 L766,179.84 L767,179.36 L768,178.8 L769,177.91 L770,177.1 L771,176.37 L772,176.82 L773,177.41 L774,177.72 L775,178.44 L776,178.75 L777,179.65 L778,180.06 L779,180.2 L780,181.16 L781,180.96 L782,181.29 L783,181.48 L784,181.5 L785,181.62 L786,181.86 L787,181.83 L788,182.42 L789,182.12 L790,182.69 L791,182.33 L792,182.38 L793,182.43 L794,182.22 L795,182.28 L796,182.42 L797,182.47 L798,182.73 L799,182.79 L800,182.23 L801,182.52 L802,182.28 L803,182.68 L804,182.39 L805,182.74 L806,182.53 L807,182.28 L808,182.2 L809,182.35 L810,182.72 L811,182.29 L812,182.49 L813,182.42 L814,182.41 L815,182.68 L816,182.33 L817,182.63 L818,182.6 L819,182.76 L820,182.51 L821,182.75 L822,182.46 L823,182.54 L824,182.57 L825,182.7 L826,182.74 L827,182.27 L828,182.28 L829,182.52 L830,182.69 L831,182.52 L832,182.38 L833,182.78 L834,182.38 L835,182.25 L836,175.56 L837,173.38 L838,176.14 L839,172.1 L840,168.8 L841,165.22 L842,169.8 L843,174.19 L844,174.62 L845,175.41 L846,176.2 L847,176.63 L848,176.87 L849,177.66 L850,177.77 L851,178.49 L852,179.5 L853,179.78 L854,180.26 L855,181.17 L856,181.47 L857,181.7" fill="none" stroke="#73bf69" stroke-width="1.1" stroke-linejoin="round" stroke-opacity="1"/><path d="M640,182.6 L640.5,182.6 L641.0,182.6 L641.5,182.6 L642.0,182.6 L642.5,182.6 L643.0,182.6 L643.5,182.6 L644.0,182.6 L644.5,182.6 L645.0,182.6 L645.5,182.6 L646.0,182.6 L646.5,182.6 L647.0,182.6 L647.5,182.6 L648.0,182.6 L648.5,182.6 L649.0,182.6 L649.5,182.6 L650.0,182.6 L650.5,182.6 L651.0,182.6 L651.5,182.6 L652.0,182.6 L652.5,182.6 L653.0,182.6 L653.5,182.6 L654.0,182.6 L654.5,182.6 L655.0,182.6 L655.5,182.6 L656.0,182.6 L656.5,182.6 L657.0,182.6 L657.5,182.6 L658.0,182.6 L658.5,182.6 L659.0,182.6 L659.5,182.6 L660.0,182.6 L660.5,182.6 L661.0,182.6 L661.5,182.6 L662.0,182.6 L662.5,182.6 L663.0,182.6 L663.5,182.6 L664.0,182.6 L664.5,182.6 L665.0,182.6 L665.5,182.6 L666.0,182.6 L666.5,182.6 L667.0,182.6 L667.5,182.6 L668.0,182.6 L668.5,182.6 L669.0,182.6 L669.5,182.6 L670.0,182.6 L670.5,182.6 L671.0,182.6 L671.5,182.6 L672.0,182.6 L672.5,182.6 L673.0,182.6 L673.5,182.6 L674.0,182.6 L674.5,182.6 L675.0,182.6 L675.5,182.6 L676.0,182.6 L676.5,182.6 L677.0,182.6 L677.5,182.6 L678.0,182.6 L678.5,182.6 L679.0,182.6 L679.5,182.6 L680.0,182.6 L680.5,182.6 L681.0,182.6 L681.5,182.6 L682.0,182.6 L682.5,182.6 L683.0,182.6 L683.5,182.6 L684.0,182.6 L684.5,182.6 L685.0,182.6 L685.5,182.6 L686.0,182.6 L686.5,182.6 L687.0,182.6 L687.5,182.6 L688.0,182.6 L688.5,182.6 L689.0,182.6 L689.5,182.6 L690.0,182.6 L690.5,182.6 L691.0,182.6 L691.5,182.6 L692.0,182.6 L692.5,182.6 L693.0,182.6 L693.5,182.6 L694.0,182.6 L694.5,182.6 L695.0,182.6 L695.5,182.6 L696.0,182.6 L696.5,182.6 L697.0,182.6 L697.5,182.6 L698.0,182.6 L698.5,182.6 L699.0,182.6 L699.5,182.6 L700.0,182.6 L700.5,182.6 L701.0,182.6 L701.5,182.6 L702.0,182.6 L702.5,182.6 L703.0,182.6 L703.5,182.6 L704.0,182.6 L704.5,182.6 L705.0,182.6 L705.5,182.6 L706.0,182.6 L706.5,182.6 L707.0,182.6 L707.5,182.6 L708.0,182.6 L708.5,182.6 L709.0,182.6 L709.5,182.6 L710.0,182.6 L710.5,182.6 L711.0,182.6 L711.5,182.6 L712.0,182.6 L712.5,182.6 L713.0,182.6 L713.5,182.6 L714.0,182.6 L714.5,182.6 L715.0,182.6 L715.5,182.6 L716.0,182.6 L716.5,182.6 L717.0,182.6 L717.5,182.6 L718.0,182.6 L718.5,182.6 L719.0,182.6 L719.5,182.6 L720.0,182.6 L720.5,182.6 L721.0,182.6 L721.5,182.6 L722.0,182.6 L722.5,182.6 L723.0,182.6 L723.5,182.6 L724.0,182.6 L724.5,182.6 L725.0,182.6 L725.5,182.6 L726.0,182.6 L726.5,182.6 L727.0,182.6 L727.5,182.6 L728.0,182.6 L728.5,182.6 L729.0,182.6 L729.5,182.6 L730.0,182.6 L730.5,182.6 L731.0,182.6 L731.5,182.6 L732.0,182.6 L732.5,182.6 L733.0,182.6 L733.5,182.6 L734.0,182.6 L734.5,182.6 L735.0,182.6 L735.5,182.6 L736.0,182.6 L736.5,182.6 L737.0,182.6 L737.5,182.6 L738.0,182.6 L738.5,182.6 L739.0,182.6 L739.5,182.6 L740.0,182.6 L740.5,182.6 L741.0,182.6 L741.5,182.6 L742.0,182.6 L742.5,182.6 L743.0,182.6 L743.5,182.6 L744.0,182.6 L744.5,182.6 L745.0,182.6 L745.5,182.6 L746.0,182.6 L746.5,182.6 L747.0,182.6 L747.5,182.6 L748.0,182.6 L748.5,182.6 L749.0,182.6 L749.5,182.6 L750.0,182.6 L750.5,182.6 L751.0,182.6 L751.5,182.6 L752.0,182.6 L752.5,182.6 L753.0,182.6 L753.5,182.6 L754.0,182.6 L754.5,182.6 L755.0,182.6 L755.5,182.6 L756.0,182.6 L756.5,182.6 L757.0,182.6 L757.5,182.6 L758.0,182.6 L758.5,182.6 L759.0,182.6 L759.5,182.6 L760.0,182.6 L760.5,182.6 L761.0,182.6 L761.5,182.6 L762.0,182.6 L762.5,182.6 L763.0,182.6 L763.5,182.6 L764.0,182.6 L764.5,182.6 L765.0,182.6 L765.5,182.6 L766.0,182.6 L766.5,182.6 L767.0,182.6 L767.5,182.6 L768.0,182.6 L768.5,182.6 L769.0,182.6 L769.5,182.6 L770.0,182.6 L770.5,182.6 L771.0,182.6 L771.5,182.6 L772.0,182.6 L772.5,182.6 L773.0,182.6 L773.5,182.6 L774.0,182.6 L774.5,182.6 L775.0,182.6 L775.5,182.6 L776.0,182.6 L776.5,182.6 L777.0,182.6 L777.5,182.6 L778.0,182.6 L778.5,182.6 L779.0,182.6 L779.5,182.6 L780.0,182.6 L780.5,182.6 L781.0,182.6 L781.5,182.6 L782.0,182.6 L782.5,182.6 L783.0,182.6 L783.5,182.6 L784.0,182.6 L784.5,182.6 L785.0,182.6 L785.5,182.6 L786.0,182.6 L786.5,182.6 L787.0,182.6 L787.5,182.6 L788.0,182.6 L788.5,182.6 L789.0,182.6 L789.5,182.6 L790.0,182.6 L790.5,182.6 L791.0,182.6 L791.5,182.6 L792.0,182.6 L792.5,182.6 L793.0,182.6 L793.5,182.6 L794.0,182.6 L794.5,182.6 L795.0,182.6 L795.5,182.6 L796.0,182.6 L796.5,182.6 L797.0,182.6 L797.5,182.6 L798.0,182.6 L798.5,182.6 L799.0,182.6 L799.5,182.6 L800.0,182.6 L800.5,182.6 L801.0,182.6 L801.5,182.6 L802.0,182.6 L802.5,182.6 L803.0,182.6 L803.5,182.6 L804.0,182.6 L804.5,182.6 L805.0,182.6 L805.5,182.6 L806.0,182.6 L806.5,182.6 L807.0,182.6 L807.5,182.6 L808.0,182.6 L808.5,182.6 L809.0,182.6 L809.5,182.6 L810.0,182.6 L810.5,182.6 L811.0,182.6 L811.5,182.6 L812.0,182.6 L812.5,182.6 L813.0,182.6 L813.5,182.6 L814.0,182.6 L814.5,182.6 L815.0,182.6 L815.5,182.6 L816.0,182.6 L816.5,182.6 L817.0,182.6 L817.5,182.6 L818.0,182.6 L818.5,182.6 L819.0,182.6 L819.5,182.6 L820.0,182.6 L820.5,182.6 L821.0,182.6 L821.5,182.6 L822.0,182.6 L822.5,182.6 L823.0,182.6 L823.5,182.6 L824.0,182.6 L824.5,182.6 L825.0,182.6 L825.5,182.6 L826.0,182.6 L826.5,182.6 L827.0,182.6 L827.5,182.6 L828.0,182.6 L828.5,182.6 L829.0,182.6 L829.5,182.6 L830.0,182.6 L830.5,182.6 L831.0,182.6 L831.5,182.6 L832.0,182.6 L832.5,182.6 L833.0,182.6 L833.5,182.6 L834.0,182.6 L834.5,182.6 L835.0,182.6 L835.5,182.6 L836.0,182.6 L836.5,182.6 L837.0,182.6 L837.5,182.6 L838.0,182.6 L838.5,182.6 L839.0,182.6 L839.5,182.6 L840.0,182.6 L840.5,182.6 L841.0,182.6 L841.5,182.6 L842.0,182.6 L842.5,182.6 L843.0,182.6 L843.5,182.6 L844.0,182.6 L844.5,182.6 L845.0,182.6 L845.5,182.6 L846.0,182.6 L846.5,176.3 L847.0,170.0 L847.5,149.23 L848.0,128.46 L848.5,118.82 L849.0,125.88 L849.5,132.94 L850.0,140.0 L850.5,145.0 L851.0,150.0 L851.5,155.0 L852.0,160.0 L852.5,162.0 L853.0,164.0 L853.5,166.0 L854.0,168.0 L854.5,170.0 L855.0,172.0 L855.5,173.25 L856.0,174.5 L856.5,175.75 L857.0,177.0" fill="none" stroke="#fade2a" stroke-width="1.0" stroke-linejoin="round" stroke-opacity="1"/><line x1="53" y1="302.7" x2="220.7" y2="302.7" stroke="rgba(240,250,255,0.09)" stroke-width="1"/><line x1="53" y1="313.2" x2="220.7" y2="313.2" stroke="rgba(240,250,255,0.09)" stroke-width="1"/><line x1="53" y1="323.7" x2="220.7" y2="323.7" stroke="rgba(240,250,255,0.09)" stroke-width="1"/><line x1="53" y1="334.2" x2="220.7" y2="334.2" stroke="rgba(240,250,255,0.09)" stroke-width="1"/><line x1="53" y1="344.7" x2="220.7" y2="344.7" stroke="rgba(240,250,255,0.09)" stroke-width="1"/><line x1="53" y1="355.2" x2="220.7" y2="355.2" stroke="rgba(240,250,255,0.09)" stroke-width="1"/><line x1="53" y1="365.7" x2="220.7" y2="365.7" stroke="rgba(240,250,255,0.09)" stroke-width="1"/><line x1="53" y1="376.2" x2="220.7" y2="376.2" stroke="rgba(240,250,255,0.09)" stroke-width="1"/><line x1="53" y1="386.7" x2="220.7" y2="386.7" stroke="rgba(240,250,255,0.09)" stroke-width="1"/><line x1="78.75" y1="292.5" x2="78.75" y2="391" stroke="rgba(240,250,255,0.09)" stroke-width="1"/><line x1="120.85" y1="292.5" x2="120.85" y2="391" stroke="rgba(240,250,255,0.09)" stroke-width="1"/><line x1="162.95" y1="292.5" x2="162.95" y2="391" stroke="rgba(240,250,255,0.09)" stroke-width="1"/><line x1="205.05" y1="292.5" x2="205.05" y2="391" stroke="rgba(240,250,255,0.09)" stroke-width="1"/><path d="M53,391 L53,336.85 L54.2,331.88 L55.4,330.82 L56.6,325.53 L57.8,323.95 L59.0,321.39 L60.2,321.04 L61.4,318.06 L62.6,318.28 L63.8,316.28 L65.0,317.37 L66.2,315.2 L67.4,321.53 L68.6,325.23 L69.8,333.15 L71.0,331.57 L72.2,330.37 L73.4,326.83 L74.6,325.47 L75.8,322.6 L77.0,323.64 L78.2,322.01 L79.4,328.05 L80.6,329.89 L81.8,334.82 L83.0,331.98 L84.2,333.77 L85.4,329.26 L86.6,329.18 L87.8,325.56 L89.0,325.37 L90.2,323.9 L91.4,323.55 L92.6,316.7 L93.8,317.97 L95.0,321.3 L96.2,326.83 L97.4,327.17 L98.6,319.67 L99.8,316.49 L101.0,321.46 L102.2,321.9 L103.4,327.8 L104.6,330.52 L105.8,337.05 L107.0,338.88 L108.2,347.18 L109.4,345.52 L110.6,337.31 L111.8,326.69 L113.0,326.32 L114.2,323.68 L115.4,326.15 L116.6,328.3 L117.8,337.0 L119.0,343.56 L120.2,354.44 L121.4,364.11 L122.6,356.24 L123.8,348.31 L125.0,346.63 L126.2,352.47 L127.4,345.41 L128.6,334.03 L129.8,327.02 L131.0,323.46 L132.2,327.48 L133.4,325.67 L134.6,327.31 L135.8,324.29 L137.0,326.93 L138.2,323.46 L139.4,324.92 L140.6,324.43 L141.8,325.93 L143.0,323.11 L144.2,325.18 L145.4,323.17 L146.6,324.38 L147.8,323.82 L149.0,324.27 L150.2,324.63 L151.4,333.03 L152.6,337.4 L153.8,339.68 L155.0,336.78 L156.2,333.74 L157.4,327.38 L158.6,325.65 L159.8,320.06 L161.0,318.93 L162.2,319.46 L163.4,325.67 L164.6,327.77 L165.8,332.44 L167.0,329.47 L168.2,329.11 L169.4,324.54 L170.6,326.48 L171.8,323.82 L173.0,325.97 L174.2,323.83 L175.4,325.19 L176.6,323.93 L177.8,325.69 L179.0,323.8 L180.2,325.22 L181.4,323.86 L182.6,324.93 L183.8,321.49 L185.0,322.73 L186.2,324.17 L187.4,327.24 L188.6,328.7 L189.8,333.25 L191.0,330.78 L192.2,332.11 L193.4,325.4 L194.6,315.82 L195.8,302.37 L197.0,306.88 L198.2,307.72 L199.4,314.98 L200.6,317.48 L201.8,322.63 L203.0,326.04 L204.2,328.69 L205.4,329.59 L206.6,331.6 L207.8,332.24 L209.0,337.13 L210.2,337.59 L211.4,335.11 L212.6,328.49 L213.8,319.74 L215.0,306.16 L216.2,311.35 L217.4,312.71 L218.6,316.61 L219.8,318.52 L220.7,322.0 L220.7,391 Z" fill="#73bf69" fill-opacity="0.1" stroke="none"/><path d="M53,391 L53,352.58 L54.2,350.58 L55.4,348.64 L56.6,345.99 L57.8,345.92 L59.0,343.44 L60.2,345.54 L61.4,350.5 L62.6,359.09 L63.8,353.55 L65.0,350.17 L66.2,348.37 L67.4,349.72 L68.6,346.62 L69.8,347.61 L71.0,345.79 L72.2,345.82 L73.4,343.71 L74.6,344.95 L75.8,342.55 L77.0,343.73 L78.2,343.62 L79.4,346.86 L80.6,348.43 L81.8,352.3 L83.0,350.51 L84.2,350.45 L85.4,347.81 L86.6,348.44 L87.8,347.01 L89.0,346.49 L90.2,345.11 L91.4,345.42 L92.6,344.31 L93.8,348.77 L95.0,350.11 L96.2,348.99 L97.4,345.19 L98.6,344.86 L99.8,342.26 L101.0,344.28 L102.2,344.38 L103.4,347.94 L104.6,352.07 L105.8,359.8 L107.0,359.93 L108.2,362.4 L109.4,359.17 L110.6,355.8 L111.8,348.71 L113.0,347.58 L114.2,345.38 L115.4,346.12 L116.6,347.09 L117.8,354.91 L119.0,364.97 L120.2,377.98 L121.4,377.47 L122.6,372.24 L123.8,365.99 L125.0,363.35 L126.2,357.41 L127.4,353.87 L128.6,348.17 L129.8,346.12 L131.0,344.5 L132.2,345.35 L133.4,343.5 L134.6,344.07 L135.8,342.63 L137.0,344.74 L138.2,343.0 L139.4,343.33 L140.6,342.37 L141.8,345.08 L143.0,345.81 L144.2,347.81 L145.4,346.62 L146.6,348.04 L147.8,344.82 L149.0,346.36 L150.2,345.72 L151.4,351.62 L152.6,355.24 L153.8,355.92 L155.0,352.57 L156.2,352.34 L157.4,348.92 L158.6,348.09 L159.8,345.36 L161.0,344.33 L162.2,341.24 L163.4,344.7 L164.6,346.29 L165.8,350.86 L167.0,348.64 L168.2,348.86 L169.4,346.22 L170.6,346.27 L171.8,343.75 L173.0,344.56 L174.2,343.52 L175.4,345.63 L176.6,343.49 L177.8,345.78 L179.0,344.88 L180.2,346.11 L181.4,343.27 L182.6,343.5 L183.8,341.12 L185.0,341.87 L186.2,342.05 L187.4,345.39 L188.6,346.64 L189.8,350.06 L191.0,350.41 L192.2,353.31 L193.4,353.82 L194.6,356.38 L195.8,353.52 L197.0,349.68 L198.2,345.43 L199.4,347.23 L200.6,348.32 L201.8,349.49 L203.0,349.7 L204.2,350.65 L205.4,350.25 L206.6,352.52 L207.8,351.43 L209.0,358.25 L210.2,363.77 L211.4,367.86 L212.6,362.3 L213.8,359.11 L215.0,353.78 L216.2,352.57 L217.4,348.86 L218.6,349.77 L219.8,346.3 L220.7,346.0 L220.7,391 Z" fill="#fade2a" fill-opacity="0.1" stroke="none"/><path d="M53,336.85 L54.2,331.88 L55.4,330.82 L56.6,325.53 L57.8,323.95 L59.0,321.39 L60.2,321.04 L61.4,318.06 L62.6,318.28 L63.8,316.28 L65.0,317.37 L66.2,315.2 L67.4,321.53 L68.6,325.23 L69.8,333.15 L71.0,331.57 L72.2,330.37 L73.4,326.83 L74.6,325.47 L75.8,322.6 L77.0,323.64 L78.2,322.01 L79.4,328.05 L80.6,329.89 L81.8,334.82 L83.0,331.98 L84.2,333.77 L85.4,329.26 L86.6,329.18 L87.8,325.56 L89.0,325.37 L90.2,323.9 L91.4,323.55 L92.6,316.7 L93.8,317.97 L95.0,321.3 L96.2,326.83 L97.4,327.17 L98.6,319.67 L99.8,316.49 L101.0,321.46 L102.2,321.9 L103.4,327.8 L104.6,330.52 L105.8,337.05 L107.0,338.88 L108.2,347.18 L109.4,345.52 L110.6,337.31 L111.8,326.69 L113.0,326.32 L114.2,323.68 L115.4,326.15 L116.6,328.3 L117.8,337.0 L119.0,343.56 L120.2,354.44 L121.4,364.11 L122.6,356.24 L123.8,348.31 L125.0,346.63 L126.2,352.47 L127.4,345.41 L128.6,334.03 L129.8,327.02 L131.0,323.46 L132.2,327.48 L133.4,325.67 L134.6,327.31 L135.8,324.29 L137.0,326.93 L138.2,323.46 L139.4,324.92 L140.6,324.43 L141.8,325.93 L143.0,323.11 L144.2,325.18 L145.4,323.17 L146.6,324.38 L147.8,323.82 L149.0,324.27 L150.2,324.63 L151.4,333.03 L152.6,337.4 L153.8,339.68 L155.0,336.78 L156.2,333.74 L157.4,327.38 L158.6,325.65 L159.8,320.06 L161.0,318.93 L162.2,319.46 L163.4,325.67 L164.6,327.77 L165.8,332.44 L167.0,329.47 L168.2,329.11 L169.4,324.54 L170.6,326.48 L171.8,323.82 L173.0,325.97 L174.2,323.83 L175.4,325.19 L176.6,323.93 L177.8,325.69 L179.0,323.8 L180.2,325.22 L181.4,323.86 L182.6,324.93 L183.8,321.49 L185.0,322.73 L186.2,324.17 L187.4,327.24 L188.6,328.7 L189.8,333.25 L191.0,330.78 L192.2,332.11 L193.4,325.4 L194.6,315.82 L195.8,302.37 L197.0,306.88 L198.2,307.72 L199.4,314.98 L200.6,317.48 L201.8,322.63 L203.0,326.04 L204.2,328.69 L205.4,329.59 L206.6,331.6 L207.8,332.24 L209.0,337.13 L210.2,337.59 L211.4,335.11 L212.6,328.49 L213.8,319.74 L215.0,306.16 L216.2,311.35 L217.4,312.71 L218.6,316.61 L219.8,318.52 L220.7,322.0" fill="none" stroke="#73bf69" stroke-width="1.0" stroke-linejoin="round" stroke-opacity="1"/><path d="M53,352.58 L54.2,350.58 L55.4,348.64 L56.6,345.99 L57.8,345.92 L59.0,343.44 L60.2,345.54 L61.4,350.5 L62.6,359.09 L63.8,353.55 L65.0,350.17 L66.2,348.37 L67.4,349.72 L68.6,346.62 L69.8,347.61 L71.0,345.79 L72.2,345.82 L73.4,343.71 L74.6,344.95 L75.8,342.55 L77.0,343.73 L78.2,343.62 L79.4,346.86 L80.6,348.43 L81.8,352.3 L83.0,350.51 L84.2,350.45 L85.4,347.81 L86.6,348.44 L87.8,347.01 L89.0,346.49 L90.2,345.11 L91.4,345.42 L92.6,344.31 L93.8,348.77 L95.0,350.11 L96.2,348.99 L97.4,345.19 L98.6,344.86 L99.8,342.26 L101.0,344.28 L102.2,344.38 L103.4,347.94 L104.6,352.07 L105.8,359.8 L107.0,359.93 L108.2,362.4 L109.4,359.17 L110.6,355.8 L111.8,348.71 L113.0,347.58 L114.2,345.38 L115.4,346.12 L116.6,347.09 L117.8,354.91 L119.0,364.97 L120.2,377.98 L121.4,377.47 L122.6,372.24 L123.8,365.99 L125.0,363.35 L126.2,357.41 L127.4,353.87 L128.6,348.17 L129.8,346.12 L131.0,344.5 L132.2,345.35 L133.4,343.5 L134.6,344.07 L135.8,342.63 L137.0,344.74 L138.2,343.0 L139.4,343.33 L140.6,342.37 L141.8,345.08 L143.0,345.81 L144.2,347.81 L145.4,346.62 L146.6,348.04 L147.8,344.82 L149.0,346.36 L150.2,345.72 L151.4,351.62 L152.6,355.24 L153.8,355.92 L155.0,352.57 L156.2,352.34 L157.4,348.92 L158.6,348.09 L159.8,345.36 L161.0,344.33 L162.2,341.24 L163.4,344.7 L164.6,346.29 L165.8,350.86 L167.0,348.64 L168.2,348.86 L169.4,346.22 L170.6,346.27 L171.8,343.75 L173.0,344.56 L174.2,343.52 L175.4,345.63 L176.6,343.49 L177.8,345.78 L179.0,344.88 L180.2,346.11 L181.4,343.27 L182.6,343.5 L183.8,341.12 L185.0,341.87 L186.2,342.05 L187.4,345.39 L188.6,346.64 L189.8,350.06 L191.0,350.41 L192.2,353.31 L193.4,353.82 L194.6,356.38 L195.8,353.52 L197.0,349.68 L198.2,345.43 L199.4,347.23 L200.6,348.32 L201.8,349.49 L203.0,349.7 L204.2,350.65 L205.4,350.25 L206.6,352.52 L207.8,351.43 L209.0,358.25 L210.2,363.77 L211.4,367.86 L212.6,362.3 L213.8,359.11 L215.0,353.78 L216.2,352.57 L217.4,348.86 L218.6,349.77 L219.8,346.3 L220.7,346.0" fill="none" stroke="#fade2a" stroke-width="1.05" stroke-linejoin="round" stroke-opacity="1"/><line x1="473.75" y1="302.0" x2="633" y2="302.0" stroke="rgba(240,250,255,0.09)" stroke-width="1"/><line x1="473.75" y1="313.09" x2="633" y2="313.09" stroke="rgba(240,250,255,0.09)" stroke-width="1"/><line x1="473.75" y1="324.18" x2="633" y2="324.18" stroke="rgba(240,250,255,0.09)" stroke-width="1"/><line x1="473.75" y1="335.27" x2="633" y2="335.27" stroke="rgba(240,250,255,0.09)" stroke-width="1"/><line x1="473.75" y1="346.36" x2="633" y2="346.36" stroke="rgba(240,250,255,0.09)" stroke-width="1"/><line x1="473.75" y1="357.45" x2="633" y2="357.45" stroke="rgba(240,250,255,0.09)" stroke-width="1"/><line x1="473.75" y1="368.53999999999996" x2="633" y2="368.53999999999996" stroke="rgba(240,250,255,0.09)" stroke-width="1"/><line x1="473.75" y1="379.63" x2="633" y2="379.63" stroke="rgba(240,250,255,0.09)" stroke-width="1"/><line x1="473.75" y1="390.72" x2="633" y2="390.72" stroke="rgba(240,250,255,0.09)" stroke-width="1"/><line x1="497.5" y1="292.5" x2="497.5" y2="390.75" stroke="rgba(240,250,255,0.09)" stroke-width="1"/><line x1="537.7" y1="292.5" x2="537.7" y2="390.75" stroke="rgba(240,250,255,0.09)" stroke-width="1"/><line x1="577.9" y1="292.5" x2="577.9" y2="390.75" stroke="rgba(240,250,255,0.09)" stroke-width="1"/><line x1="618.1" y1="292.5" x2="618.1" y2="390.75" stroke="rgba(240,250,255,0.09)" stroke-width="1"/><path d="M473.75,390.75 L473.75,302 L633,302 L633,390.75 Z" fill="#73bf69" fill-opacity="0.1" stroke="none"/><path d="M473.75,390.5 L633,390.5" fill="none" stroke="#8ab8ff" stroke-width="1.1" stroke-linejoin="round" stroke-opacity="0.65"/><path d="M473.75,302 L633,302" fill="none" stroke="#73bf69" stroke-width="1.1" stroke-linejoin="round" stroke-opacity="0.8"/><line x1="49.25" y1="463.9" x2="209.2" y2="463.9" stroke="rgba(240,250,255,0.09)" stroke-width="1"/><line x1="49.25" y1="479.6" x2="209.2" y2="479.6" stroke="rgba(240,250,255,0.09)" stroke-width="1"/><line x1="49.25" y1="495.4" x2="209.2" y2="495.4" stroke="rgba(240,250,255,0.09)" stroke-width="1"/><line x1="49.25" y1="510.3" x2="209.2" y2="510.3" stroke="rgba(240,250,255,0.09)" stroke-width="1"/><line x1="73.6" y1="451" x2="73.6" y2="522" stroke="rgba(240,250,255,0.09)" stroke-width="1"/><line x1="113.8" y1="451" x2="113.8" y2="522" stroke="rgba(240,250,255,0.09)" stroke-width="1"/><line x1="154.5" y1="451" x2="154.5" y2="522" stroke="rgba(240,250,255,0.09)" stroke-width="1"/><line x1="194.5" y1="451" x2="194.5" y2="522" stroke="rgba(240,250,255,0.09)" stroke-width="1"/><path d="M49.25,522 L49.25,477.67 L50.85,475.91 L52.45,476.56 L54.05,476.93 L55.65,483.1 L57.25,482.71 L58.85,479.86 L60.45,472.21 L62.05,474.91 L63.65,473.71 L65.25,476.41 L66.85,476.23 L68.45,476.56 L70.05,464.82 L71.65,462.34 L73.25,466.69 L74.85,472.76 L76.45,473.54 L78.05,476.21 L79.65,474.43 L81.25,475.69 L82.85,473.79 L84.45,475.13 L86.05,472.73 L87.65,473.79 L89.25,472.7 L90.85,474.43 L92.45,473.22 L94.05,475.98 L95.65,474.97 L97.25,477.8 L98.85,473.35 L100.45,472.88 L102.05,472.56 L103.65,476.62 L105.25,476.9 L106.85,484.78 L108.45,486.92 L110.05,491.82 L111.65,491.53 L113.25,487.42 L114.85,479.79 L116.45,478.29 L118.05,473.51 L119.65,474.77 L121.25,472.83 L122.85,474.67 L124.45,473.86 L126.05,475.86 L127.65,473.94 L129.25,474.56 L130.85,473.0 L132.45,473.37 L134.05,468.47 L135.65,467.58 L137.25,463.93 L138.85,467.88 L140.45,468.23 L142.05,472.71 L143.65,474.42 L145.25,481.87 L146.85,476.9 L148.45,474.42 L150.05,470.1 L151.65,471.36 L153.25,469.06 L154.85,471.62 L156.45,469.31 L158.05,472.67 L159.65,471.4 L161.25,473.99 L162.85,472.18 L164.45,474.54 L166.05,473.65 L167.65,476.35 L169.25,474.64 L170.85,476.55 L172.45,474.68 L174.05,475.76 L175.65,473.65 L177.25,475.48 L178.85,473.94 L180.45,474.66 L182.05,471.48 L183.65,472.14 L185.25,468.73 L186.85,471.26 L188.45,469.32 L190.05,472.46 L191.65,470.89 L193.25,475.31 L194.85,474.99 L196.45,479.36 L198.05,479.35 L199.65,483.75 L201.25,481.8 L202.85,480.51 L204.45,475.36 L206.05,476.28 L207.65,473.36 L209.2,475.1159196290572 L209.2,522 Z" fill="#73bf69" fill-opacity="0.1" stroke="none"/><path d="M49.25,522 L49.25,481.52 L50.65,477.02 L52.05,480.16 L53.45,473.18 L54.85,476.08 L56.25,472.22 L57.65,475.52 L59.05,475.17 L60.45,476.24 L61.85,467.07 L63.25,474.08 L64.65,473.04 L66.05,477.12 L67.45,473.41 L68.85,482.54 L70.25,476.14 L71.65,477.59 L73.05,473.25 L74.45,478.42 L75.85,474.49 L77.25,480.12 L78.65,476.32 L80.05,476.76 L81.45,473.77 L82.85,477.09 L84.25,472.95 L85.65,476.38 L87.05,469.19 L88.45,470.43 L89.85,473.65 L91.25,472.08 L92.65,463.47 L94.05,471.37 L95.45,469.94 L96.85,476.79 L98.25,478.69 L99.65,487.45 L101.05,488.19 L102.45,488.24 L103.85,478.84 L105.25,477.12 L106.65,475.06 L108.05,484.02 L109.45,485.44 L110.85,493.94 L112.25,497.55 L113.65,500.33 L115.05,489.83 L116.45,488.42 L117.85,478.5 L119.25,477.64 L120.65,471.45 L122.05,477.31 L123.45,475.78 L124.85,480.33 L126.25,475.95 L127.65,478.58 L129.05,473.1 L130.45,475.68 L131.85,471.19 L133.25,475.78 L134.65,469.5 L136.05,470.22 L137.45,470.22 L138.85,478.31 L140.25,475.41 L141.65,479.19 L143.05,475.66 L144.45,482.73 L145.85,479.62 L147.25,475.94 L148.65,470.14 L150.05,470.13 L151.45,466.39 L152.85,468.77 L154.25,464.96 L155.65,473.14 L157.05,473.65 L158.45,476.07 L159.85,472.05 L161.25,474.47 L162.65,472.91 L164.05,476.29 L165.45,473.55 L166.85,475.88 L168.25,471.32 L169.65,475.07 L171.05,468.43 L172.45,469.47 L173.85,465.28 L175.25,471.91 L176.65,468.49 L178.05,476.09 L179.45,474.51 L180.85,479.56 L182.25,474.99 L183.65,478.82 L185.05,477.95 L186.45,481.41 L187.85,474.37 L189.25,476.99 L190.65,470.57 L192.05,477.48 L193.45,476.23 L194.85,481.19 L196.25,477.92 L197.65,485.61 L199.05,488.74 L200.45,492.74 L201.85,484.4 L203.25,484.06 L204.65,474.85 L206.05,475.77 L207.45,474.27 L208.85,478.52 L209.2,477.03330757341575 L209.2,522 Z" fill="#fade2a" fill-opacity="0.1" stroke="none"/><path d="M49.25,522 L49.25,518.5 L50.45,518.5 L51.65,518.5 L52.85,515.3381664114092 L54.05,517.9205771297865 L55.25,515.4005149063438 L57,512 L57.65,514.4489135238052 L58.85,516.790230361201 L60.05,515.6814381988636 L61.25,517.0918174696409 L62.4,508 L63.65,516.9618533344214 L64.85,514.7760300980198 L66.05,518.3294438288184 L67.25,512.4440045263476 L68.45,514.3527217228392 L69.65,512.5550419229552 L70.85,515.1681582999024 L72.05,515.4912629156438 L73.25,518.5 L74.45,518.5 L75.65,518.5 L76.85,518.5 L78.05,518.5 L79.25,518.5 L80.45,518.5 L81.65,518.5 L82.85,518.5 L84.05,518.5 L85.25,518.5 L86.45,518.5 L87.65,518.5 L88.85,518.5 L90.05,514.9711228813428 L91.4,509.5 L92.45,515.8523672067662 L93.65,517.4362908044016 L94.85,517.0683655465223 L96.05,516.5702566419994 L97.25,515.4602840254404 L98.45,516.5778875938454 L99.65,513.6306812694878 L100.85,518.3572497150659 L102.05,518.5 L103.25,518.5 L104.45,518.5 L105.65,518.5 L106.85,518.5 L108.05,518.5 L109.25,518.5 L110.45,518.5 L111.65,518.5 L112.85,518.5 L114.05,515.073519827727 L115.25,512.4196906899159 L116.45,516.2857541828156 L117.65,518.2517805558282 L119.4,508.5 L120.05,512.9175242479557 L121.25,516.9258668765021 L122.45,516.2323847045858 L124,512 L124.85,513.8919394308772 L126.05,518.5 L127.25,518.5 L128.45,518.5 L129.65,518.5 L130.85,518.5 L132.05,518.5 L133.25,518.5 L134.45,518.5 L135.65,518.5 L136.85,518.5 L138.05,518.5 L139.25,518.5 L140.45,517.1526709512566 L141.65,514.8311404261799 L142.85,516.0881948388464 L144.05,514.465671229006 L145.25,517.4701629690064 L146.45,515.4965866031488 L147.4,508 L148.85,516.048891426783 L150.05,513.8135339362232 L151.25,516.5833919172895 L152.45,516.8359050488788 L153.65,515.8720525543106 L154.85,512.9975401072602 L156.05,515.2109374391586 L157.25,517.3540195544283 L158.45,514.8667830881685 L159.65,513.8116962774752 L160.85,511.66397676073046 L162.05,518.5 L163.25,518.5 L164.45,518.5 L165.65,518.5 L166.85,518.5 L168.05,518.5 L169.25,518.5 L170.45,518.5 L171.65,518.5 L172.85,518.5 L174.05,518.5 L175.25,518.5 L176.45,518.5 L177.65,518.5 L178.85,518.5 L180.05,518.5 L181.25,518.5 L182.45,518.5 L183.65,518.5 L184.85,518.5 L186.05,517.9746667096756 L187.25,514.3217257392017 L188.45,514.2476475420218 L189.65,517.238279524936 L190.85,515.7360904536087 L192.05,511.35427043970594 L193.25,515.9380944806601 L194.45,516.654506923506 L195.65,516.1040965145046 L196.85,513.2275500839984 L198.05,511.5225718473858 L199.25,517.1567636299785 L200.45,517.9318089789267 L201.65,516.8045574565025 L202.85,517.2943717868251 L204.05,514.229439899952 L205.25,517.9431422568252 L206.45,515.4763255932269 L207.65,515.836654027966 L208.85,515.7518004134288 L208.85,522 Z" fill="#ff9830" fill-opacity="0.1" stroke="none"/><path d="M49.25,477.67 L50.85,475.91 L52.45,476.56 L54.05,476.93 L55.65,483.1 L57.25,482.71 L58.85,479.86 L60.45,472.21 L62.05,474.91 L63.65,473.71 L65.25,476.41 L66.85,476.23 L68.45,476.56 L70.05,464.82 L71.65,462.34 L73.25,466.69 L74.85,472.76 L76.45,473.54 L78.05,476.21 L79.65,474.43 L81.25,475.69 L82.85,473.79 L84.45,475.13 L86.05,472.73 L87.65,473.79 L89.25,472.7 L90.85,474.43 L92.45,473.22 L94.05,475.98 L95.65,474.97 L97.25,477.8 L98.85,473.35 L100.45,472.88 L102.05,472.56 L103.65,476.62 L105.25,476.9 L106.85,484.78 L108.45,486.92 L110.05,491.82 L111.65,491.53 L113.25,487.42 L114.85,479.79 L116.45,478.29 L118.05,473.51 L119.65,474.77 L121.25,472.83 L122.85,474.67 L124.45,473.86 L126.05,475.86 L127.65,473.94 L129.25,474.56 L130.85,473.0 L132.45,473.37 L134.05,468.47 L135.65,467.58 L137.25,463.93 L138.85,467.88 L140.45,468.23 L142.05,472.71 L143.65,474.42 L145.25,481.87 L146.85,476.9 L148.45,474.42 L150.05,470.1 L151.65,471.36 L153.25,469.06 L154.85,471.62 L156.45,469.31 L158.05,472.67 L159.65,471.4 L161.25,473.99 L162.85,472.18 L164.45,474.54 L166.05,473.65 L167.65,476.35 L169.25,474.64 L170.85,476.55 L172.45,474.68 L174.05,475.76 L175.65,473.65 L177.25,475.48 L178.85,473.94 L180.45,474.66 L182.05,471.48 L183.65,472.14 L185.25,468.73 L186.85,471.26 L188.45,469.32 L190.05,472.46 L191.65,470.89 L193.25,475.31 L194.85,474.99 L196.45,479.36 L198.05,479.35 L199.65,483.75 L201.25,481.8 L202.85,480.51 L204.45,475.36 L206.05,476.28 L207.65,473.36 L209.2,475.1159196290572" fill="none" stroke="#73bf69" stroke-width="1.0" stroke-linejoin="round" stroke-opacity="1"/><path d="M49.25,481.52 L50.65,477.02 L52.05,480.16 L53.45,473.18 L54.85,476.08 L56.25,472.22 L57.65,475.52 L59.05,475.17 L60.45,476.24 L61.85,467.07 L63.25,474.08 L64.65,473.04 L66.05,477.12 L67.45,473.41 L68.85,482.54 L70.25,476.14 L71.65,477.59 L73.05,473.25 L74.45,478.42 L75.85,474.49 L77.25,480.12 L78.65,476.32 L80.05,476.76 L81.45,473.77 L82.85,477.09 L84.25,472.95 L85.65,476.38 L87.05,469.19 L88.45,470.43 L89.85,473.65 L91.25,472.08 L92.65,463.47 L94.05,471.37 L95.45,469.94 L96.85,476.79 L98.25,478.69 L99.65,487.45 L101.05,488.19 L102.45,488.24 L103.85,478.84 L105.25,477.12 L106.65,475.06 L108.05,484.02 L109.45,485.44 L110.85,493.94 L112.25,497.55 L113.65,500.33 L115.05,489.83 L116.45,488.42 L117.85,478.5 L119.25,477.64 L120.65,471.45 L122.05,477.31 L123.45,475.78 L124.85,480.33 L126.25,475.95 L127.65,478.58 L129.05,473.1 L130.45,475.68 L131.85,471.19 L133.25,475.78 L134.65,469.5 L136.05,470.22 L137.45,470.22 L138.85,478.31 L140.25,475.41 L141.65,479.19 L143.05,475.66 L144.45,482.73 L145.85,479.62 L147.25,475.94 L148.65,470.14 L150.05,470.13 L151.45,466.39 L152.85,468.77 L154.25,464.96 L155.65,473.14 L157.05,473.65 L158.45,476.07 L159.85,472.05 L161.25,474.47 L162.65,472.91 L164.05,476.29 L165.45,473.55 L166.85,475.88 L168.25,471.32 L169.65,475.07 L171.05,468.43 L172.45,469.47 L173.85,465.28 L175.25,471.91 L176.65,468.49 L178.05,476.09 L179.45,474.51 L180.85,479.56 L182.25,474.99 L183.65,478.82 L185.05,477.95 L186.45,481.41 L187.85,474.37 L189.25,476.99 L190.65,470.57 L192.05,477.48 L193.45,476.23 L194.85,481.19 L196.25,477.92 L197.65,485.61 L199.05,488.74 L200.45,492.74 L201.85,484.4 L203.25,484.06 L204.65,474.85 L206.05,475.77 L207.45,474.27 L208.85,478.52 L209.2,477.03330757341575" fill="none" stroke="#fade2a" stroke-width="1.05" stroke-linejoin="round" stroke-opacity="1"/><path d="M49.25,518.5 L50.45,518.5 L51.65,518.5 L52.85,515.3381664114092 L54.05,517.9205771297865 L55.25,515.4005149063438 L57,512 L57.65,514.4489135238052 L58.85,516.790230361201 L60.05,515.6814381988636 L61.25,517.0918174696409 L62.4,508 L63.65,516.9618533344214 L64.85,514.7760300980198 L66.05,518.3294438288184 L67.25,512.4440045263476 L68.45,514.3527217228392 L69.65,512.5550419229552 L70.85,515.1681582999024 L72.05,515.4912629156438 L73.25,518.5 L74.45,518.5 L75.65,518.5 L76.85,518.5 L78.05,518.5 L79.25,518.5 L80.45,518.5 L81.65,518.5 L82.85,518.5 L84.05,518.5 L85.25,518.5 L86.45,518.5 L87.65,518.5 L88.85,518.5 L90.05,514.9711228813428 L91.4,509.5 L92.45,515.8523672067662 L93.65,517.4362908044016 L94.85,517.0683655465223 L96.05,516.5702566419994 L97.25,515.4602840254404 L98.45,516.5778875938454 L99.65,513.6306812694878 L100.85,518.3572497150659 L102.05,518.5 L103.25,518.5 L104.45,518.5 L105.65,518.5 L106.85,518.5 L108.05,518.5 L109.25,518.5 L110.45,518.5 L111.65,518.5 L112.85,518.5 L114.05,515.073519827727 L115.25,512.4196906899159 L116.45,516.2857541828156 L117.65,518.2517805558282 L119.4,508.5 L120.05,512.9175242479557 L121.25,516.9258668765021 L122.45,516.2323847045858 L124,512 L124.85,513.8919394308772 L126.05,518.5 L127.25,518.5 L128.45,518.5 L129.65,518.5 L130.85,518.5 L132.05,518.5 L133.25,518.5 L134.45,518.5 L135.65,518.5 L136.85,518.5 L138.05,518.5 L139.25,518.5 L140.45,517.1526709512566 L141.65,514.8311404261799 L142.85,516.0881948388464 L144.05,514.465671229006 L145.25,517.4701629690064 L146.45,515.4965866031488 L147.4,508 L148.85,516.048891426783 L150.05,513.8135339362232 L151.25,516.5833919172895 L152.45,516.8359050488788 L153.65,515.8720525543106 L154.85,512.9975401072602 L156.05,515.2109374391586 L157.25,517.3540195544283 L158.45,514.8667830881685 L159.65,513.8116962774752 L160.85,511.66397676073046 L162.05,518.5 L163.25,518.5 L164.45,518.5 L165.65,518.5 L166.85,518.5 L168.05,518.5 L169.25,518.5 L170.45,518.5 L171.65,518.5 L172.85,518.5 L174.05,518.5 L175.25,518.5 L176.45,518.5 L177.65,518.5 L178.85,518.5 L180.05,518.5 L181.25,518.5 L182.45,518.5 L183.65,518.5 L184.85,518.5 L186.05,517.9746667096756 L187.25,514.3217257392017 L188.45,514.2476475420218 L189.65,517.238279524936 L190.85,515.7360904536087 L192.05,511.35427043970594 L193.25,515.9380944806601 L194.45,516.654506923506 L195.65,516.1040965145046 L196.85,513.2275500839984 L198.05,511.5225718473858 L199.25,517.1567636299785 L200.45,517.9318089789267 L201.65,516.8045574565025 L202.85,517.2943717868251 L204.05,514.229439899952 L205.25,517.9431422568252 L206.45,515.4763255932269 L207.65,515.836654027966 L208.85,515.7518004134288" fill="none" stroke="#ff9830" stroke-width="1.05" stroke-linejoin="round" stroke-opacity="1"/><path d="M184.5,522 L184.5,522 L186.3,502 L188,522 L188,522 Z" fill="#8ab8ff" fill-opacity="0.25" stroke="none"/><path d="M184.5,522 L186.3,502 L188,522" fill="none" stroke="#8ab8ff" stroke-width="1.0" stroke-linejoin="round" stroke-opacity="1"/><path d="M201.6,522 L201.6,522 L203.3,495.8 L205,522 L205,522 Z" fill="#8ab8ff" fill-opacity="0.25" stroke="none"/><path d="M201.6,522 L203.3,495.8 L205,522" fill="none" stroke="#8ab8ff" stroke-width="1.0" stroke-linejoin="round" stroke-opacity="1"/><line x1="265.8" y1="459.1" x2="425.8" y2="459.1" stroke="rgba(240,250,255,0.09)" stroke-width="1"/><line x1="265.8" y1="475.7" x2="425.8" y2="475.7" stroke="rgba(240,250,255,0.09)" stroke-width="1"/><line x1="265.8" y1="492.1" x2="425.8" y2="492.1" stroke="rgba(240,250,255,0.09)" stroke-width="1"/><line x1="265.8" y1="508.9" x2="425.8" y2="508.9" stroke="rgba(240,250,255,0.09)" stroke-width="1"/><line x1="289.6" y1="451" x2="289.6" y2="522" stroke="rgba(240,250,255,0.09)" stroke-width="1"/><line x1="329.5" y1="451" x2="329.5" y2="522" stroke="rgba(240,250,255,0.09)" stroke-width="1"/><line x1="370.5" y1="451" x2="370.5" y2="522" stroke="rgba(240,250,255,0.09)" stroke-width="1"/><line x1="410.7" y1="451" x2="410.7" y2="522" stroke="rgba(240,250,255,0.09)" stroke-width="1"/><path d="M265.8,522 L265.8,476.2 L267.4,472.23 L269.0,473.32 L270.6,472.26 L272.2,480.34 L273.8,481.28 L275.4,478.54 L277.0,473.27 L278.6,473.6 L280.2,471.14 L281.8,472.03 L283.4,468.45 L285.0,470.02 L286.6,465.86 L288.2,469.28 L289.8,469.11 L291.4,472.38 L293.0,471.48 L294.6,474.15 L296.2,471.57 L297.8,473.08 L299.4,471.72 L301.0,472.88 L302.6,470.67 L304.2,471.68 L305.8,469.56 L307.4,470.67 L309.0,468.32 L310.6,470.42 L312.2,468.24 L313.8,471.81 L315.4,471.33 L317.0,477.08 L318.6,475.19 L320.2,474.91 L321.8,470.89 L323.4,476.05 L325.0,477.61 L326.6,483.29 L328.2,485.81 L329.8,491.09 L331.4,483.25 L333.0,479.1 L334.6,475.09 L336.2,474.56 L337.8,471.44 L339.4,472.54 L341.0,471.43 L342.6,472.53 L344.2,471.02 L345.8,473.15 L347.4,470.57 L349.0,472.24 L350.6,469.76 L352.2,471.23 L353.8,470.05 L355.4,470.92 L357.0,469.26 L358.6,475.31 L360.2,475.65 L361.8,479.39 L363.4,477.47 L365.0,478.21 L366.6,473.23 L368.2,474.62 L369.8,472.26 L371.4,473.54 L373.0,471.12 L374.6,471.56 L376.2,468.79 L377.8,471.02 L379.4,469.73 L381.0,472.86 L382.6,471.11 L384.2,473.56 L385.8,471.42 L387.4,472.91 L389.0,470.04 L390.6,471.86 L392.2,469.81 L393.8,470.62 L395.4,468.97 L397.0,471.35 L398.6,471.17 L400.2,473.22 L401.8,471.58 L403.4,473.9 L405.0,472.81 L406.6,474.63 L408.2,473.31 L409.8,475.45 L411.4,474.94 L413.0,481.28 L414.6,483.01 L416.2,484.61 L417.8,482.04 L419.4,483.34 L421.0,477.8 L422.6,477.01 L424.2,472.46 L425.8,473.87 L425.8,522 Z" fill="#73bf69" fill-opacity="0.1" stroke="none"/><path d="M265.8,522 L265.8,479.61 L267.2,473.65 L268.6,476.07 L270.0,469.38 L271.4,471.6 L272.8,472.33 L274.2,475.84 L275.6,468.17 L277.0,469.17 L278.4,462.98 L279.8,474.5 L281.2,472.27 L282.6,473.55 L284.0,470.27 L285.4,477.57 L286.8,473.08 L288.2,474.13 L289.6,469.6 L291.0,475.86 L292.4,474.47 L293.8,479.57 L295.2,474.37 L296.6,474.36 L298.0,470.45 L299.4,472.6 L300.8,471.0 L302.2,473.43 L303.6,464.09 L305.0,470.12 L306.4,467.97 L307.8,465.13 L309.2,461.55 L310.6,468.87 L312.0,469.44 L313.4,473.54 L314.8,474.42 L316.2,483.35 L317.6,485.07 L319.0,483.44 L320.4,469.94 L321.8,472.04 L323.2,471.82 L324.6,482.43 L326.0,486.55 L327.4,495.25 L328.8,496.03 L330.2,497.35 L331.6,488.56 L333.0,487.42 L334.4,474.22 L335.8,471.41 L337.2,467.95 L338.6,473.22 L340.0,469.58 L341.4,474.42 L342.8,473.34 L344.2,479.07 L345.6,472.98 L347.0,471.89 L348.4,467.24 L349.8,470.25 L351.2,468.12 L352.6,473.76 L354.0,470.7 L355.4,473.07 L356.8,467.86 L358.2,472.76 L359.6,470.02 L361.0,480.64 L362.4,473.83 L363.8,468.88 L365.2,462.71 L366.6,469.88 L368.0,465.09 L369.4,465.6 L370.8,465.97 L372.2,472.81 L373.6,469.86 L375.0,474.26 L376.4,469.34 L377.8,470.5 L379.2,467.57 L380.6,473.03 L382.0,468.84 L383.4,473.32 L384.8,467.76 L386.2,469.27 L387.6,463.04 L389.0,465.14 L390.4,461.42 L391.8,467.53 L393.2,465.71 L394.6,474.19 L396.0,472.1 L397.4,476.89 L398.8,472.18 L400.2,475.25 L401.6,471.5 L403.0,481.12 L404.4,474.49 L405.8,475.6 L407.2,469.49 L408.6,472.08 L410.0,471.21 L411.4,477.08 L412.8,475.99 L414.2,487.01 L415.6,492.08 L417.0,485.74 L418.4,476.6 L419.8,477.66 L421.2,471.56 L422.6,472.12 L424.0,469.93 L425.4,473.7 L425.8,472.21792890262753 L425.8,522 Z" fill="#fade2a" fill-opacity="0.1" stroke="none"/><path d="M265.8,476.2 L267.4,472.23 L269.0,473.32 L270.6,472.26 L272.2,480.34 L273.8,481.28 L275.4,478.54 L277.0,473.27 L278.6,473.6 L280.2,471.14 L281.8,472.03 L283.4,468.45 L285.0,470.02 L286.6,465.86 L288.2,469.28 L289.8,469.11 L291.4,472.38 L293.0,471.48 L294.6,474.15 L296.2,471.57 L297.8,473.08 L299.4,471.72 L301.0,472.88 L302.6,470.67 L304.2,471.68 L305.8,469.56 L307.4,470.67 L309.0,468.32 L310.6,470.42 L312.2,468.24 L313.8,471.81 L315.4,471.33 L317.0,477.08 L318.6,475.19 L320.2,474.91 L321.8,470.89 L323.4,476.05 L325.0,477.61 L326.6,483.29 L328.2,485.81 L329.8,491.09 L331.4,483.25 L333.0,479.1 L334.6,475.09 L336.2,474.56 L337.8,471.44 L339.4,472.54 L341.0,471.43 L342.6,472.53 L344.2,471.02 L345.8,473.15 L347.4,470.57 L349.0,472.24 L350.6,469.76 L352.2,471.23 L353.8,470.05 L355.4,470.92 L357.0,469.26 L358.6,475.31 L360.2,475.65 L361.8,479.39 L363.4,477.47 L365.0,478.21 L366.6,473.23 L368.2,474.62 L369.8,472.26 L371.4,473.54 L373.0,471.12 L374.6,471.56 L376.2,468.79 L377.8,471.02 L379.4,469.73 L381.0,472.86 L382.6,471.11 L384.2,473.56 L385.8,471.42 L387.4,472.91 L389.0,470.04 L390.6,471.86 L392.2,469.81 L393.8,470.62 L395.4,468.97 L397.0,471.35 L398.6,471.17 L400.2,473.22 L401.8,471.58 L403.4,473.9 L405.0,472.81 L406.6,474.63 L408.2,473.31 L409.8,475.45 L411.4,474.94 L413.0,481.28 L414.6,483.01 L416.2,484.61 L417.8,482.04 L419.4,483.34 L421.0,477.8 L422.6,477.01 L424.2,472.46 L425.8,473.87" fill="none" stroke="#73bf69" stroke-width="1.0" stroke-linejoin="round" stroke-opacity="1"/><path d="M265.8,479.61 L267.2,473.65 L268.6,476.07 L270.0,469.38 L271.4,471.6 L272.8,472.33 L274.2,475.84 L275.6,468.17 L277.0,469.17 L278.4,462.98 L279.8,474.5 L281.2,472.27 L282.6,473.55 L284.0,470.27 L285.4,477.57 L286.8,473.08 L288.2,474.13 L289.6,469.6 L291.0,475.86 L292.4,474.47 L293.8,479.57 L295.2,474.37 L296.6,474.36 L298.0,470.45 L299.4,472.6 L300.8,471.0 L302.2,473.43 L303.6,464.09 L305.0,470.12 L306.4,467.97 L307.8,465.13 L309.2,461.55 L310.6,468.87 L312.0,469.44 L313.4,473.54 L314.8,474.42 L316.2,483.35 L317.6,485.07 L319.0,483.44 L320.4,469.94 L321.8,472.04 L323.2,471.82 L324.6,482.43 L326.0,486.55 L327.4,495.25 L328.8,496.03 L330.2,497.35 L331.6,488.56 L333.0,487.42 L334.4,474.22 L335.8,471.41 L337.2,467.95 L338.6,473.22 L340.0,469.58 L341.4,474.42 L342.8,473.34 L344.2,479.07 L345.6,472.98 L347.0,471.89 L348.4,467.24 L349.8,470.25 L351.2,468.12 L352.6,473.76 L354.0,470.7 L355.4,473.07 L356.8,467.86 L358.2,472.76 L359.6,470.02 L361.0,480.64 L362.4,473.83 L363.8,468.88 L365.2,462.71 L366.6,469.88 L368.0,465.09 L369.4,465.6 L370.8,465.97 L372.2,472.81 L373.6,469.86 L375.0,474.26 L376.4,469.34 L377.8,470.5 L379.2,467.57 L380.6,473.03 L382.0,468.84 L383.4,473.32 L384.8,467.76 L386.2,469.27 L387.6,463.04 L389.0,465.14 L390.4,461.42 L391.8,467.53 L393.2,465.71 L394.6,474.19 L396.0,472.1 L397.4,476.89 L398.8,472.18 L400.2,475.25 L401.6,471.5 L403.0,481.12 L404.4,474.49 L405.8,475.6 L407.2,469.49 L408.6,472.08 L410.0,471.21 L411.4,477.08 L412.8,475.99 L414.2,487.01 L415.6,492.08 L417.0,485.74 L418.4,476.6 L419.8,477.66 L421.2,471.56 L422.6,472.12 L424.0,469.93 L425.4,473.7 L425.8,472.21792890262753" fill="none" stroke="#fade2a" stroke-width="1.05" stroke-linejoin="round" stroke-opacity="1"/><line x1="486.7" y1="451.4" x2="641.7" y2="451.4" stroke="rgba(240,250,255,0.09)" stroke-width="1"/><line x1="486.7" y1="466.4" x2="641.7" y2="466.4" stroke="rgba(240,250,255,0.09)" stroke-width="1"/><line x1="486.7" y1="481.3" x2="641.7" y2="481.3" stroke="rgba(240,250,255,0.09)" stroke-width="1"/><line x1="486.7" y1="496.2" x2="641.7" y2="496.2" stroke="rgba(240,250,255,0.09)" stroke-width="1"/><line x1="486.7" y1="511" x2="641.7" y2="511" stroke="rgba(240,250,255,0.09)" stroke-width="1"/><line x1="509.6" y1="451" x2="509.6" y2="522" stroke="rgba(240,250,255,0.09)" stroke-width="1"/><line x1="548.6" y1="451" x2="548.6" y2="522" stroke="rgba(240,250,255,0.09)" stroke-width="1"/><line x1="587.6" y1="451" x2="587.6" y2="522" stroke="rgba(240,250,255,0.09)" stroke-width="1"/><line x1="625.8" y1="451" x2="625.8" y2="522" stroke="rgba(240,250,255,0.09)" stroke-width="1"/><path d="M486.7,522 L486.7,464.5 L495,464.5 L495.5,464 L545,464 L545.5,463.5 L590,463.5 L590.5,463 L641,463 L641,522 Z" fill="#fade2a" fill-opacity="0.1" stroke="none"/><path d="M486.7,522 L486.7,464.5 L641,463 L641,522 Z" fill="#73bf69" fill-opacity="0.1" stroke="none"/><path d="M486.7,464.5 L495,464.5 L495.5,464 L545,464 L545.5,463.5 L590,463.5 L590.5,463 L641,463" fill="none" stroke="#fade2a" stroke-width="1.2" stroke-linejoin="round" stroke-opacity="0.9"/><line x1="703" y1="451.4" x2="857.6" y2="451.4" stroke="rgba(240,250,255,0.09)" stroke-width="1"/><line x1="703" y1="466.4" x2="857.6" y2="466.4" stroke="rgba(240,250,255,0.09)" stroke-width="1"/><line x1="703" y1="481.3" x2="857.6" y2="481.3" stroke="rgba(240,250,255,0.09)" stroke-width="1"/><line x1="703" y1="496.2" x2="857.6" y2="496.2" stroke="rgba(240,250,255,0.09)" stroke-width="1"/><line x1="703" y1="511" x2="857.6" y2="511" stroke="rgba(240,250,255,0.09)" stroke-width="1"/><line x1="726.5" y1="451" x2="726.5" y2="522" stroke="rgba(240,250,255,0.09)" stroke-width="1"/><line x1="765" y1="451" x2="765" y2="522" stroke="rgba(240,250,255,0.09)" stroke-width="1"/><line x1="803.6" y1="451" x2="803.6" y2="522" stroke="rgba(240,250,255,0.09)" stroke-width="1"/><line x1="842" y1="451" x2="842" y2="522" stroke="rgba(240,250,255,0.09)" stroke-width="1"/><path d="M703,522 L703,463.1 L710.6,463.1 L710.6,462.6 L804.3,462.6 L804.3,461.2 L857.6,461.2 L857.6,522 Z" fill="#73bf69" fill-opacity="0.1" stroke="none"/><path d="M703,522 L703,463.9 L790.8,463.9 L790.8,463.1 L857.6,463.1 L857.6,522 Z" fill="#fade2a" fill-opacity="0.1" stroke="none"/><path d="M703,463.1 L710.6,463.1 L710.6,462.6 L804.3,462.6 L804.3,461.2 L857.6,461.2" fill="none" stroke="#73bf69" stroke-width="1.1" stroke-linejoin="round" stroke-opacity="0.85"/><path d="M703,463.9 L790.8,463.9 L790.8,463.1 L857.6,463.1" fill="none" stroke="#fade2a" stroke-width="1.1" stroke-linejoin="round" stroke-opacity="0.9"/><path d="M703,522 L703,513.8 L824.6,513.8 L824.6,513 L857.6,513 L857.6,522 Z" fill="#ff9830" fill-opacity="0.1" stroke="none"/><path d="M703,513.8 L824.6,513.8 L824.6,513 L857.6,513" fill="none" stroke="#ff9830" stroke-width="1.2" stroke-linejoin="round" stroke-opacity="0.9"/>
</svg>
<div class="t" style="left:18px;top:17.02px;font-size:9.2px;line-height:11.96px;color:#ccccdc;font-weight:400;-webkit-text-stroke-width:0.45px;">Host</div><div class="t" style="left:48.5px;top:15.83px;font-size:10.26px;line-height:13.34px;color:#ccccdc;font-weight:400;transform-origin:0 50%;transform: scaleX(1.05);">localhost</div><div class="t" style="left:127.25px;top:17.02px;font-size:9.2px;line-height:11.96px;color:#ccccdc;font-weight:400;-webkit-text-stroke-width:0.45px;">Percentile</div><div class="t" style="left:179.25px;top:15.83px;font-size:10.26px;line-height:13.34px;color:#ccccdc;font-weight:400;transform-origin:0 50%;transform: scaleX(1.05);">50</div><div class="t" style="left:227px;top:17.02px;font-size:9.2px;line-height:11.96px;color:#ccccdc;font-weight:400;-webkit-text-stroke-width:0.45px;">datasource</div><div class="t" style="left:285px;top:15.83px;font-size:10.26px;line-height:13.34px;color:#ccccdc;font-weight:400;transform-origin:0 50%;transform: scaleX(1.05);">influxdb-mainnet</div><div class="t" style="left:652.6px;top:16.99px;font-size:9.4px;line-height:12.22px;color:#ccccdc;font-weight:400;transform-origin:0 50%;transform: scaleX(1.075);-webkit-text-stroke-width:0.35px;">Last 1 hour</div><div class="t" style="left:784.3px;top:16.73px;font-size:9.8px;line-height:12.74px;color:#ccccdc;font-weight:400;transform-origin:0 50%;transform: scaleX(1.075);-webkit-text-stroke-width:0.35px;">Cancel</div><div class="t" style="left:831px;top:16.54px;font-size:10.1px;line-height:13.13px;color:#ccccdc;font-weight:400;transform-origin:0 50%;transform: scaleX(1.06);">30s</div>
<div style="position:absolute;left:0;top:0;width:880px;height:522px;will-change:transform">
<div class="t" style="left:32px;top:50.36px;font-size:11.3px;line-height:14.69px;color:#d8d8e4;font-weight:400;transform-origin:0 50%;transform: scaleX(1.06);-webkit-text-stroke-width:0.5px;">System</div><div class="t" style="left:32.5px;top:235.49px;font-size:11.4px;line-height:14.82px;color:#d8d8e4;font-weight:400;transform-origin:0 50%;transform: scaleX(1.085);-webkit-text-stroke-width:0.5px;">Network</div><div class="t" style="left:16.8px;top:79.86px;font-size:9.6px;line-height:12.48px;color:#ccccdc;font-weight:400;transform-origin:0 50%;transform: scaleX(1.01);-webkit-text-stroke-width:0.55px;">CPU</div><div class="t" style="left:304.8px;top:79.86px;font-size:9.6px;line-height:12.48px;color:#ccccdc;font-weight:400;transform-origin:0 50%;transform: scaleX(1.11);-webkit-text-stroke-width:0.55px;">Memory</div><div class="t" style="left:592.3px;top:79.86px;font-size:9.6px;line-height:12.48px;color:#ccccdc;font-weight:400;transform-origin:0 50%;transform: scaleX(1.085);-webkit-text-stroke-width:0.55px;">Disk</div><div class="t" style="left:42px;top:102.75px;font-size:9px;line-height:11.7px;color:#ccccdc;font-weight:400;transform-origin:100% 50%;transform:translateX(-100%);">140%</div><div class="t" style="left:42px;top:113.51px;font-size:9px;line-height:11.7px;color:#ccccdc;font-weight:400;transform-origin:100% 50%;transform:translateX(-100%);">120%</div><div class="t" style="left:42px;top:124.27px;font-size:9px;line-height:11.7px;color:#ccccdc;font-weight:400;transform-origin:100% 50%;transform:translateX(-100%);">100%</div><div class="t" style="left:42px;top:135.03px;font-size:9px;line-height:11.7px;color:#ccccdc;font-weight:400;transform-origin:100% 50%;transform:translateX(-100%);">80%</div><div class="t" style="left:42px;top:145.79px;font-size:9px;line-height:11.7px;color:#ccccdc;font-weight:400;transform-origin:100% 50%;transform:translateX(-100%);">60%</div><div class="t" style="left:42px;top:156.55px;font-size:9px;line-height:11.7px;color:#ccccdc;font-weight:400;transform-origin:100% 50%;transform:translateX(-100%);">40%</div><div class="t" style="left:42px;top:167.31px;font-size:9px;line-height:11.7px;color:#ccccdc;font-weight:400;transform-origin:100% 50%;transform:translateX(-100%);">20%</div><div class="t" style="left:42px;top:178.07px;font-size:9px;line-height:11.7px;color:#ccccdc;font-weight:400;transform-origin:100% 50%;transform:translateX(-100%);">0%</div><div class="t" style="left:79.5px;top:188.50px;font-size:9px;line-height:11.7px;color:#ccccdc;font-weight:400;transform-origin:50% 50%;transform:translateX(-50%);">14:00</div><div class="t" style="left:118.9px;top:188.50px;font-size:9px;line-height:11.7px;color:#ccccdc;font-weight:400;transform-origin:50% 50%;transform:translateX(-50%);">14:10</div><div class="t" style="left:158.3px;top:188.50px;font-size:9px;line-height:11.7px;color:#ccccdc;font-weight:400;transform-origin:50% 50%;transform:translateX(-50%);">14:20</div><div class="t" style="left:197.7px;top:188.50px;font-size:9px;line-height:11.7px;color:#ccccdc;font-weight:400;transform-origin:50% 50%;transform:translateX(-50%);">14:30</div><div class="t" style="left:237.1px;top:188.50px;font-size:9px;line-height:11.7px;color:#ccccdc;font-weight:400;transform-origin:50% 50%;transform:translateX(-50%);">14:40</div><div class="t" style="left:276.5px;top:188.50px;font-size:9px;line-height:11.7px;color:#ccccdc;font-weight:400;transform-origin:50% 50%;transform:translateX(-50%);">14:50</div><div class="t" style="left:35.5px;top:205.75px;font-size:9px;line-height:11.7px;color:#ccccdc;font-weight:400;">system</div><div class="t" style="left:87.5px;top:205.75px;font-size:9px;line-height:11.7px;color:#ccccdc;font-weight:400;">iowait</div><div class="t" style="left:133.0px;top:205.75px;font-size:9px;line-height:11.7px;color:#ccccdc;font-weight:400;">geth</div><div class="t" style="left:327px;top:104.75px;font-size:9px;line-height:11.7px;color:#ccccdc;font-weight:400;transform-origin:100% 50%;transform:translateX(-100%);">4 GB</div><div class="t" style="left:327px;top:123.12px;font-size:9px;line-height:11.7px;color:#ccccdc;font-weight:400;transform-origin:100% 50%;transform:translateX(-100%);">3 GB</div><div class="t" style="left:327px;top:141.50px;font-size:9px;line-height:11.7px;color:#ccccdc;font-weight:400;transform-origin:100% 50%;transform:translateX(-100%);">2 GB</div><div class="t" style="left:327px;top:159.88px;font-size:9px;line-height:11.7px;color:#ccccdc;font-weight:400;transform-origin:100% 50%;transform:translateX(-100%);">1 GB</div><div class="t" style="left:327px;top:178.25px;font-size:9px;line-height:11.7px;color:#ccccdc;font-weight:400;transform-origin:100% 50%;transform:translateX(-100%);">0 B</div><div class="t" style="left:367.0px;top:188.50px;font-size:9px;line-height:11.7px;color:#ccccdc;font-weight:400;transform-origin:50% 50%;transform:translateX(-50%);">14:00</div><div class="t" style="left:406.7px;top:188.50px;font-size:9px;line-height:11.7px;color:#ccccdc;font-weight:400;transform-origin:50% 50%;transform:translateX(-50%);">14:10</div><div class="t" style="left:446.4px;top:188.50px;font-size:9px;line-height:11.7px;color:#ccccdc;font-weight:400;transform-origin:50% 50%;transform:translateX(-50%);">14:20</div><div class="t" style="left:486.1px;top:188.50px;font-size:9px;line-height:11.7px;color:#ccccdc;font-weight:400;transform-origin:50% 50%;transform:translateX(-50%);">14:30</div><div class="t" style="left:525.8px;top:188.50px;font-size:9px;line-height:11.7px;color:#ccccdc;font-weight:400;transform-origin:50% 50%;transform:translateX(-50%);">14:40</div><div class="t" style="left:565.5px;top:188.50px;font-size:9px;line-height:11.7px;color:#ccccdc;font-weight:400;transform-origin:50% 50%;transform:translateX(-50%);clip-path:inset(0 1px 0 0);">14:50</div><div class="t" style="left:323.5px;top:205.75px;font-size:9px;line-height:11.7px;color:#ccccdc;font-weight:400;">alloc</div><div class="t" style="left:364.5px;top:205.75px;font-size:9px;line-height:11.7px;color:#ccccdc;font-weight:400;">used</div><div class="t" style="left:406.5px;top:205.75px;font-size:9px;line-height:11.7px;color:#ccccdc;font-weight:400;">held</div><div class="t" style="left:636.5px;top:104.75px;font-size:9px;line-height:11.7px;color:#ccccdc;font-weight:400;transform-origin:100% 50%;transform:translateX(-100%);">2.50 MB/s</div><div class="t" style="left:636.5px;top:119.35px;font-size:9px;line-height:11.7px;color:#ccccdc;font-weight:400;transform-origin:100% 50%;transform:translateX(-100%);">2 MB/s</div><div class="t" style="left:636.5px;top:133.95px;font-size:9px;line-height:11.7px;color:#ccccdc;font-weight:400;transform-origin:100% 50%;transform:translateX(-100%);">1.50 MB/s</div><div class="t" style="left:636.5px;top:148.55px;font-size:9px;line-height:11.7px;color:#ccccdc;font-weight:400;transform-origin:100% 50%;transform:translateX(-100%);">1 MB/s</div><div class="t" style="left:636.5px;top:163.15px;font-size:9px;line-height:11.7px;color:#ccccdc;font-weight:400;transform-origin:100% 50%;transform:translateX(-100%);">500 kB/s</div><div class="t" style="left:636.5px;top:177.75px;font-size:9px;line-height:11.7px;color:#ccccdc;font-weight:400;transform-origin:100% 50%;transform:translateX(-100%);">0 B/s</div><div class="t" style="left:671.5px;top:188.50px;font-size:9px;line-height:11.7px;color:#ccccdc;font-weight:400;transform-origin:50% 50%;transform:translateX(-50%);">14:00</div><div class="t" style="left:707.5px;top:188.50px;font-size:9px;line-height:11.7px;color:#ccccdc;font-weight:400;transform-origin:50% 50%;transform:translateX(-50%);">14:10</div><div class="t" style="left:743.5px;top:188.50px;font-size:9px;line-height:11.7px;color:#ccccdc;font-weight:400;transform-origin:50% 50%;transform:translateX(-50%);">14:20</div><div class="t" style="left:779.5px;top:188.50px;font-size:9px;line-height:11.7px;color:#ccccdc;font-weight:400;transform-origin:50% 50%;transform:translateX(-50%);">14:30</div><div class="t" style="left:815.5px;top:188.50px;font-size:9px;line-height:11.7px;color:#ccccdc;font-weight:400;transform-origin:50% 50%;transform:translateX(-50%);">14:40</div><div class="t" style="left:851.5px;top:188.50px;font-size:9px;line-height:11.7px;color:#ccccdc;font-weight:400;transform-origin:50% 50%;transform:translateX(-50%);">14:50</div><div class="t" style="left:611.5px;top:205.75px;font-size:9px;line-height:11.7px;color:#ccccdc;font-weight:400;">read</div><div class="t" style="left:652.5px;top:205.75px;font-size:9px;line-height:11.7px;color:#ccccdc;font-weight:400;">write</div><div class="t" style="left:16.8px;top:264.86px;font-size:9.6px;line-height:12.48px;color:#ccccdc;font-weight:400;transform-origin:0 50%;transform: scaleX(1.17);-webkit-text-stroke-width:0.55px;">Traffic</div><div class="t" style="left:448.8px;top:264.86px;font-size:9.6px;line-height:12.48px;color:#ccccdc;font-weight:400;transform-origin:0 50%;transform: scaleX(1.077);-webkit-text-stroke-width:0.55px;">Peers</div><div class="t" style="left:49.25px;top:297.45px;font-size:9px;line-height:11.7px;color:#ccccdc;font-weight:400;transform-origin:100% 50%;transform:translateX(-100%);">14 kB/s</div><div class="t" style="left:49.25px;top:307.95px;font-size:9px;line-height:11.7px;color:#ccccdc;font-weight:400;transform-origin:100% 50%;transform:translateX(-100%);">13 kB/s</div><div class="t" style="left:49.25px;top:318.45px;font-size:9px;line-height:11.7px;color:#ccccdc;font-weight:400;transform-origin:100% 50%;transform:translateX(-100%);">12 kB/s</div><div class="t" style="left:49.25px;top:328.95px;font-size:9px;line-height:11.7px;color:#ccccdc;font-weight:400;transform-origin:100% 50%;transform:translateX(-100%);">11 kB/s</div><div class="t" style="left:49.25px;top:339.45px;font-size:9px;line-height:11.7px;color:#ccccdc;font-weight:400;transform-origin:100% 50%;transform:translateX(-100%);">10 kB/s</div><div class="t" style="left:49.25px;top:349.95px;font-size:9px;line-height:11.7px;color:#ccccdc;font-weight:400;transform-origin:100% 50%;transform:translateX(-100%);">9 kB/s</div><div class="t" style="left:49.25px;top:360.45px;font-size:9px;line-height:11.7px;color:#ccccdc;font-weight:400;transform-origin:100% 50%;transform:translateX(-100%);">8 kB/s</div><div class="t" style="left:49.25px;top:370.95px;font-size:9px;line-height:11.7px;color:#ccccdc;font-weight:400;transform-origin:100% 50%;transform:translateX(-100%);">7 kB/s</div><div class="t" style="left:49.25px;top:381.45px;font-size:9px;line-height:11.7px;color:#ccccdc;font-weight:400;transform-origin:100% 50%;transform:translateX(-100%);">6 kB/s</div><div class="t" style="left:77.95px;top:395.75px;font-size:9px;line-height:11.7px;color:#ccccdc;font-weight:400;transform-origin:50% 50%;transform:translateX(-50%);">14:00</div><div class="t" style="left:120.05px;top:395.75px;font-size:9px;line-height:11.7px;color:#ccccdc;font-weight:400;transform-origin:50% 50%;transform:translateX(-50%);">14:15</div><div class="t" style="left:162.14999999999998px;top:395.75px;font-size:9px;line-height:11.7px;color:#ccccdc;font-weight:400;transform-origin:50% 50%;transform:translateX(-50%);">14:30</div><div class="t" style="left:204.25px;top:395.75px;font-size:9px;line-height:11.7px;color:#ccccdc;font-weight:400;transform-origin:50% 50%;transform:translateX(-50%);">14:45</div><div class="t" style="left:249px;top:289.75px;font-size:9px;line-height:11.7px;color:#6e9fff;font-weight:400;-webkit-text-stroke-width:0.4px;">Name</div><div class="t" style="left:327px;top:289.75px;font-size:9px;line-height:11.7px;color:#6e9fff;font-weight:400;transform-origin:100% 50%;transform:translateX(-100%);-webkit-text-stroke-width:0.4px;">Mean</div><div class="t" style="left:377.8px;top:289.75px;font-size:9px;line-height:11.7px;color:#6e9fff;font-weight:400;transform-origin:100% 50%;transform:translateX(-100%);-webkit-text-stroke-width:0.4px;">Last *</div><div class="t" style="left:425px;top:289.75px;font-size:9px;line-height:11.7px;color:#6e9fff;font-weight:400;transform-origin:100% 50%;transform:translateX(-100%);-webkit-text-stroke-width:0.4px;">Max</div><div class="t" style="left:249px;top:306.55px;font-size:9px;line-height:11.7px;color:#ccccdc;font-weight:400;">ingress</div><div class="t" style="left:327px;top:306.55px;font-size:9px;line-height:11.7px;color:#ccccdc;font-weight:400;transform-origin:100% 50%;transform:translateX(-100%);">11.6 kB/s</div><div class="t" style="left:377.8px;top:306.55px;font-size:9px;line-height:11.7px;color:#ccccdc;font-weight:400;transform-origin:100% 50%;transform:translateX(-100%);">12.2 kB/s</div><div class="t" style="left:425px;top:306.55px;font-size:9px;line-height:11.7px;color:#ccccdc;font-weight:400;transform-origin:100% 50%;transform:translateX(-100%);">14.1 kB/s</div><div class="t" style="left:249px;top:323.05px;font-size:9px;line-height:11.7px;color:#ccccdc;font-weight:400;">egress</div><div class="t" style="left:327px;top:323.05px;font-size:9px;line-height:11.7px;color:#ccccdc;font-weight:400;transform-origin:100% 50%;transform:translateX(-100%);">9.53 kB/s</div><div class="t" style="left:377.8px;top:323.05px;font-size:9px;line-height:11.7px;color:#ccccdc;font-weight:400;transform-origin:100% 50%;transform:translateX(-100%);">9.84 kB/s</div><div class="t" style="left:425px;top:323.05px;font-size:9px;line-height:11.7px;color:#ccccdc;font-weight:400;transform-origin:100% 50%;transform:translateX(-100%);">10.3 kB/s</div><div class="t" style="left:470px;top:296.75px;font-size:9px;line-height:11.7px;color:#ccccdc;font-weight:400;transform-origin:100% 50%;transform:translateX(-100%);">2</div><div class="t" style="left:470px;top:307.84px;font-size:9px;line-height:11.7px;color:#ccccdc;font-weight:400;transform-origin:100% 50%;transform:translateX(-100%);">1.75</div><div class="t" style="left:470px;top:318.93px;font-size:9px;line-height:11.7px;color:#ccccdc;font-weight:400;transform-origin:100% 50%;transform:translateX(-100%);">1.5</div><div class="t" style="left:470px;top:330.02px;font-size:9px;line-height:11.7px;color:#ccccdc;font-weight:400;transform-origin:100% 50%;transform:translateX(-100%);">1.25</div><div class="t" style="left:470px;top:341.11px;font-size:9px;line-height:11.7px;color:#ccccdc;font-weight:400;transform-origin:100% 50%;transform:translateX(-100%);">1</div><div class="t" style="left:470px;top:352.20px;font-size:9px;line-height:11.7px;color:#ccccdc;font-weight:400;transform-origin:100% 50%;transform:translateX(-100%);">0.75</div><div class="t" style="left:470px;top:363.29px;font-size:9px;line-height:11.7px;color:#ccccdc;font-weight:400;transform-origin:100% 50%;transform:translateX(-100%);">0.5</div><div class="t" style="left:470px;top:374.38px;font-size:9px;line-height:11.7px;color:#ccccdc;font-weight:400;transform-origin:100% 50%;transform:translateX(-100%);">0.25</div><div class="t" style="left:470px;top:385.47px;font-size:9px;line-height:11.7px;color:#ccccdc;font-weight:400;transform-origin:100% 50%;transform:translateX(-100%);">0</div><div class="t" style="left:496.9px;top:395.75px;font-size:9px;line-height:11.7px;color:#ccccdc;font-weight:400;transform-origin:50% 50%;transform:translateX(-50%);">14:00</div><div class="t" style="left:537.1px;top:395.75px;font-size:9px;line-height:11.7px;color:#ccccdc;font-weight:400;transform-origin:50% 50%;transform:translateX(-50%);">14:15</div><div class="t" style="left:577.3px;top:395.75px;font-size:9px;line-height:11.7px;color:#ccccdc;font-weight:400;transform-origin:50% 50%;transform:translateX(-50%);">14:30</div><div class="t" style="left:617.5px;top:395.75px;font-size:9px;line-height:11.7px;color:#ccccdc;font-weight:400;transform-origin:50% 50%;transform:translateX(-50%);">14:45</div><div class="t" style="left:660.7px;top:289.75px;font-size:9px;line-height:11.7px;color:#6e9fff;font-weight:400;-webkit-text-stroke-width:0.4px;">Name</div><div class="t" style="left:714px;top:289.75px;font-size:9px;line-height:11.7px;color:#6e9fff;font-weight:400;-webkit-text-stroke-width:0.4px;">Mean</div><div class="t" style="left:770px;top:289.75px;font-size:9px;line-height:11.7px;color:#6e9fff;font-weight:400;-webkit-text-stroke-width:0.4px;">Last *</div><div class="t" style="left:827px;top:289.75px;font-size:9px;line-height:11.7px;color:#6e9fff;font-weight:400;-webkit-text-stroke-width:0.4px;">Max</div><div class="t" style="left:660.7px;top:306.55px;font-size:9px;line-height:11.7px;color:#ccccdc;font-weight:400;">peers</div><div class="t" style="left:744px;top:306.55px;font-size:9px;line-height:11.7px;color:#ccccdc;font-weight:400;transform-origin:100% 50%;transform:translateX(-100%);">2</div><div class="t" style="left:800.6px;top:306.55px;font-size:9px;line-height:11.7px;color:#ccccdc;font-weight:400;transform-origin:100% 50%;transform:translateX(-100%);">2</div><div class="t" style="left:857px;top:306.55px;font-size:9px;line-height:11.7px;color:#ccccdc;font-weight:400;transform-origin:100% 50%;transform:translateX(-100%);">2</div><div class="t" style="left:660.7px;top:323.05px;font-size:9px;line-height:11.7px;color:#ccccdc;font-weight:400;">dials</div><div class="t" style="left:744px;top:323.05px;font-size:9px;line-height:11.7px;color:#ccccdc;font-weight:400;transform-origin:100% 50%;transform:translateX(-100%);">NaN.nfinity</div><div class="t" style="left:800.6px;top:323.05px;font-size:9px;line-height:11.7px;color:#ccccdc;font-weight:400;transform-origin:100% 50%;transform:translateX(-100%);">NaN.nfinity</div><div class="t" style="left:857px;top:323.05px;font-size:9px;line-height:11.7px;color:#ccccdc;font-weight:400;transform-origin:100% 50%;transform:translateX(-100%);">NaN.nfinity</div><div class="t" style="left:660.7px;top:339.55px;font-size:9px;line-height:11.7px;color:#ccccdc;font-weight:400;">serves</div><div class="t" style="left:744px;top:339.55px;font-size:9px;line-height:11.7px;color:#ccccdc;font-weight:400;transform-origin:100% 50%;transform:translateX(-100%);">0</div><div class="t" style="left:800.6px;top:339.55px;font-size:9px;line-height:11.7px;color:#ccccdc;font-weight:400;transform-origin:100% 50%;transform:translateX(-100%);">0</div><div class="t" style="left:857px;top:339.55px;font-size:9px;line-height:11.7px;color:#ccccdc;font-weight:400;transform-origin:100% 50%;transform:translateX(-100%);">0</div><div class="t" style="left:16.8px;top:422.86px;font-size:9.6px;line-height:12.48px;color:#ccccdc;font-weight:400;transform-origin:0 50%;transform: scaleX(1.087);-webkit-text-stroke-width:0.55px;">ETH ingress data rate</div><div class="t" style="left:233.10000000000002px;top:422.86px;font-size:9.6px;line-height:12.48px;color:#ccccdc;font-weight:400;transform-origin:0 50%;transform: scaleX(1.094);-webkit-text-stroke-width:0.55px;">ETH egress data rate</div><div class="t" style="left:448.8px;top:422.86px;font-size:9.6px;line-height:12.48px;color:#ccccdc;font-weight:400;transform-origin:0 50%;transform: scaleX(1.113);-webkit-text-stroke-width:0.55px;">ETH egress traffic</div><div class="t" style="left:664.8px;top:422.86px;font-size:9.6px;line-height:12.48px;color:#ccccdc;font-weight:400;transform-origin:0 50%;transform: scaleX(1.115);-webkit-text-stroke-width:0.55px;">ETH ingress traffic</div><div class="t" style="left:45.5px;top:458.65px;font-size:9px;line-height:11.7px;color:#ccccdc;font-weight:400;transform-origin:100% 50%;transform:translateX(-100%);">5 kB/s</div><div class="t" style="left:45.5px;top:474.35px;font-size:9px;line-height:11.7px;color:#ccccdc;font-weight:400;transform-origin:100% 50%;transform:translateX(-100%);">4 kB/s</div><div class="t" style="left:45.5px;top:490.15px;font-size:9px;line-height:11.7px;color:#ccccdc;font-weight:400;transform-origin:100% 50%;transform:translateX(-100%);">3 kB/s</div><div class="t" style="left:45.5px;top:505.05px;font-size:9px;line-height:11.7px;color:#ccccdc;font-weight:400;transform-origin:100% 50%;transform:translateX(-100%);">2 kB/s</div><div class="t" style="left:262px;top:453.85px;font-size:9px;line-height:11.7px;color:#ccccdc;font-weight:400;transform-origin:100% 50%;transform:translateX(-100%);">5 kB/s</div><div class="t" style="left:262px;top:470.45px;font-size:9px;line-height:11.7px;color:#ccccdc;font-weight:400;transform-origin:100% 50%;transform:translateX(-100%);">4 kB/s</div><div class="t" style="left:262px;top:486.85px;font-size:9px;line-height:11.7px;color:#ccccdc;font-weight:400;transform-origin:100% 50%;transform:translateX(-100%);">3 kB/s</div><div class="t" style="left:262px;top:503.65px;font-size:9px;line-height:11.7px;color:#ccccdc;font-weight:400;transform-origin:100% 50%;transform:translateX(-100%);">2 kB/s</div><div class="t" style="left:483px;top:446.15px;font-size:9px;line-height:11.7px;color:#ccccdc;font-weight:400;transform-origin:100% 50%;transform:translateX(-100%);">1.20 GB</div><div class="t" style="left:483px;top:461.15px;font-size:9px;line-height:11.7px;color:#ccccdc;font-weight:400;transform-origin:100% 50%;transform:translateX(-100%);">1 GB</div><div class="t" style="left:483px;top:476.05px;font-size:9px;line-height:11.7px;color:#ccccdc;font-weight:400;transform-origin:100% 50%;transform:translateX(-100%);">800 MB</div><div class="t" style="left:483px;top:490.95px;font-size:9px;line-height:11.7px;color:#ccccdc;font-weight:400;transform-origin:100% 50%;transform:translateX(-100%);">600 MB</div><div class="t" style="left:483px;top:505.75px;font-size:9px;line-height:11.7px;color:#ccccdc;font-weight:400;transform-origin:100% 50%;transform:translateX(-100%);">400 MB</div><div class="t" style="left:699px;top:446.15px;font-size:9px;line-height:11.7px;color:#ccccdc;font-weight:400;transform-origin:100% 50%;transform:translateX(-100%);">1.20 GB</div><div class="t" style="left:699px;top:461.15px;font-size:9px;line-height:11.7px;color:#ccccdc;font-weight:400;transform-origin:100% 50%;transform:translateX(-100%);">1 GB</div><div class="t" style="left:699px;top:476.05px;font-size:9px;line-height:11.7px;color:#ccccdc;font-weight:400;transform-origin:100% 50%;transform:translateX(-100%);">800 MB</div><div class="t" style="left:699px;top:490.95px;font-size:9px;line-height:11.7px;color:#ccccdc;font-weight:400;transform-origin:100% 50%;transform:translateX(-100%);">600 MB</div><div class="t" style="left:699px;top:505.75px;font-size:9px;line-height:11.7px;color:#ccccdc;font-weight:400;transform-origin:100% 50%;transform:translateX(-100%);">400 MB</div>
</div>
<div class="b" style="left:851.6px;top:259.3px;width:17px;height:21.7px;background:#292b30;border-radius:2px;"></div><svg width="880" height="522" style="position:absolute;left:0;top:0"><circle cx="860" cy="267" r="0.8" fill="#c0c0cc"/><circle cx="860" cy="270.3" r="0.8" fill="#c0c0cc"/><circle cx="860" cy="273.5" r="0.8" fill="#c0c0cc"/></svg><div class="b" style="left:0;top:517.6px;width:880px;height:5px;background:#0b0c0e;"></div><div class="b" style="left:0;top:517.6px;width:94.5px;height:5px;background:#1a2a2e;"></div><div class="b" style="left:0;top:511px;width:4px;height:7px;background:#1a2a2e;border-top-left-radius:4px;"></div><div class="b" style="left:104px;top:517.6px;width:102px;height:5px;background:#18191d;"></div><div class="b" style="left:206px;top:517.6px;width:10px;height:5px;background:#141518;border-top:1px solid #3a3b40;box-sizing:border-box;"></div><div class="t" style="left:124px;top:517.3px;font-size:7.4px;line-height:10px;color:#6e6f78;-webkit-text-stroke-width:0;">Read the changelog</div><div class="b" style="left:805px;top:517.6px;width:75px;height:5px;background:#191a1e;"></div><div class="t" style="left:813px;top:517.5px;font-size:7.4px;line-height:10px;color:#6e6f78;-webkit-text-stroke-width:0;">&#8226; cursor small</div><div class="b" style="left:797.5px;top:517.6px;width:1px;height:5px;background:#45464c;"></div><div class="b" style="left:804.5px;top:517.6px;width:1px;height:5px;background:#2c2d32;"></div>
</body></html>
